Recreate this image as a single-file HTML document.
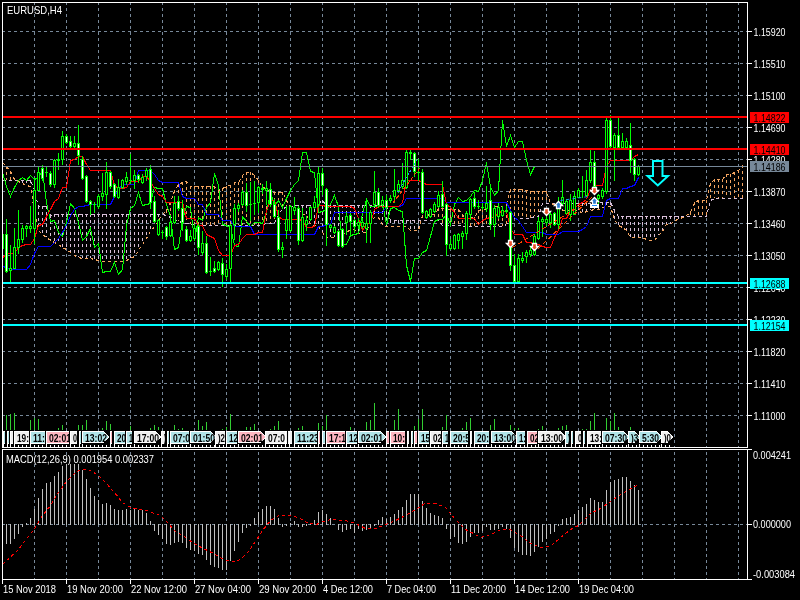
<!DOCTYPE html>
<html><head><meta charset="utf-8"><style>html,body{margin:0;padding:0;background:#000;overflow:hidden}svg{display:block;will-change:transform}</style></head>
<body><svg width="800" height="600" viewBox="0 0 800 600">
<rect width="800" height="600" fill="#000"/>
<g shape-rendering="crispEdges">
<line x1="34.5" y1="2" x2="34.5" y2="447" stroke="#778899" stroke-width="1" stroke-dasharray="3,3"/>
<line x1="34.5" y1="452" x2="34.5" y2="579" stroke="#778899" stroke-width="1" stroke-dasharray="3,3"/>
<line x1="66.5" y1="2" x2="66.5" y2="447" stroke="#778899" stroke-width="1" stroke-dasharray="3,3"/>
<line x1="66.5" y1="452" x2="66.5" y2="579" stroke="#778899" stroke-width="1" stroke-dasharray="3,3"/>
<line x1="98.5" y1="2" x2="98.5" y2="447" stroke="#778899" stroke-width="1" stroke-dasharray="3,3"/>
<line x1="98.5" y1="452" x2="98.5" y2="579" stroke="#778899" stroke-width="1" stroke-dasharray="3,3"/>
<line x1="130.5" y1="2" x2="130.5" y2="447" stroke="#778899" stroke-width="1" stroke-dasharray="3,3"/>
<line x1="130.5" y1="452" x2="130.5" y2="579" stroke="#778899" stroke-width="1" stroke-dasharray="3,3"/>
<line x1="162.5" y1="2" x2="162.5" y2="447" stroke="#778899" stroke-width="1" stroke-dasharray="3,3"/>
<line x1="162.5" y1="452" x2="162.5" y2="579" stroke="#778899" stroke-width="1" stroke-dasharray="3,3"/>
<line x1="194.5" y1="2" x2="194.5" y2="447" stroke="#778899" stroke-width="1" stroke-dasharray="3,3"/>
<line x1="194.5" y1="452" x2="194.5" y2="579" stroke="#778899" stroke-width="1" stroke-dasharray="3,3"/>
<line x1="226.5" y1="2" x2="226.5" y2="447" stroke="#778899" stroke-width="1" stroke-dasharray="3,3"/>
<line x1="226.5" y1="452" x2="226.5" y2="579" stroke="#778899" stroke-width="1" stroke-dasharray="3,3"/>
<line x1="258.5" y1="2" x2="258.5" y2="447" stroke="#778899" stroke-width="1" stroke-dasharray="3,3"/>
<line x1="258.5" y1="452" x2="258.5" y2="579" stroke="#778899" stroke-width="1" stroke-dasharray="3,3"/>
<line x1="290.5" y1="2" x2="290.5" y2="447" stroke="#778899" stroke-width="1" stroke-dasharray="3,3"/>
<line x1="290.5" y1="452" x2="290.5" y2="579" stroke="#778899" stroke-width="1" stroke-dasharray="3,3"/>
<line x1="322.5" y1="2" x2="322.5" y2="447" stroke="#778899" stroke-width="1" stroke-dasharray="3,3"/>
<line x1="322.5" y1="452" x2="322.5" y2="579" stroke="#778899" stroke-width="1" stroke-dasharray="3,3"/>
<line x1="354.5" y1="2" x2="354.5" y2="447" stroke="#778899" stroke-width="1" stroke-dasharray="3,3"/>
<line x1="354.5" y1="452" x2="354.5" y2="579" stroke="#778899" stroke-width="1" stroke-dasharray="3,3"/>
<line x1="386.5" y1="2" x2="386.5" y2="447" stroke="#778899" stroke-width="1" stroke-dasharray="3,3"/>
<line x1="386.5" y1="452" x2="386.5" y2="579" stroke="#778899" stroke-width="1" stroke-dasharray="3,3"/>
<line x1="418.5" y1="2" x2="418.5" y2="447" stroke="#778899" stroke-width="1" stroke-dasharray="3,3"/>
<line x1="418.5" y1="452" x2="418.5" y2="579" stroke="#778899" stroke-width="1" stroke-dasharray="3,3"/>
<line x1="450.5" y1="2" x2="450.5" y2="447" stroke="#778899" stroke-width="1" stroke-dasharray="3,3"/>
<line x1="450.5" y1="452" x2="450.5" y2="579" stroke="#778899" stroke-width="1" stroke-dasharray="3,3"/>
<line x1="482.5" y1="2" x2="482.5" y2="447" stroke="#778899" stroke-width="1" stroke-dasharray="3,3"/>
<line x1="482.5" y1="452" x2="482.5" y2="579" stroke="#778899" stroke-width="1" stroke-dasharray="3,3"/>
<line x1="514.5" y1="2" x2="514.5" y2="447" stroke="#778899" stroke-width="1" stroke-dasharray="3,3"/>
<line x1="514.5" y1="452" x2="514.5" y2="579" stroke="#778899" stroke-width="1" stroke-dasharray="3,3"/>
<line x1="546.5" y1="2" x2="546.5" y2="447" stroke="#778899" stroke-width="1" stroke-dasharray="3,3"/>
<line x1="546.5" y1="452" x2="546.5" y2="579" stroke="#778899" stroke-width="1" stroke-dasharray="3,3"/>
<line x1="578.5" y1="2" x2="578.5" y2="447" stroke="#778899" stroke-width="1" stroke-dasharray="3,3"/>
<line x1="578.5" y1="452" x2="578.5" y2="579" stroke="#778899" stroke-width="1" stroke-dasharray="3,3"/>
<line x1="610.5" y1="2" x2="610.5" y2="447" stroke="#778899" stroke-width="1" stroke-dasharray="3,3"/>
<line x1="610.5" y1="452" x2="610.5" y2="579" stroke="#778899" stroke-width="1" stroke-dasharray="3,3"/>
<line x1="642.5" y1="2" x2="642.5" y2="447" stroke="#778899" stroke-width="1" stroke-dasharray="3,3"/>
<line x1="642.5" y1="452" x2="642.5" y2="579" stroke="#778899" stroke-width="1" stroke-dasharray="3,3"/>
<line x1="674.5" y1="2" x2="674.5" y2="447" stroke="#778899" stroke-width="1" stroke-dasharray="3,3"/>
<line x1="674.5" y1="452" x2="674.5" y2="579" stroke="#778899" stroke-width="1" stroke-dasharray="3,3"/>
<line x1="706.5" y1="2" x2="706.5" y2="447" stroke="#778899" stroke-width="1" stroke-dasharray="3,3"/>
<line x1="706.5" y1="452" x2="706.5" y2="579" stroke="#778899" stroke-width="1" stroke-dasharray="3,3"/>
<line x1="738.5" y1="2" x2="738.5" y2="447" stroke="#778899" stroke-width="1" stroke-dasharray="3,3"/>
<line x1="738.5" y1="452" x2="738.5" y2="579" stroke="#778899" stroke-width="1" stroke-dasharray="3,3"/>
<line x1="2" y1="31.5" x2="747" y2="31.5" stroke="#778899" stroke-width="1" stroke-dasharray="3,3"/>
<line x1="2" y1="63.5" x2="747" y2="63.5" stroke="#778899" stroke-width="1" stroke-dasharray="3,3"/>
<line x1="2" y1="95.5" x2="747" y2="95.5" stroke="#778899" stroke-width="1" stroke-dasharray="3,3"/>
<line x1="2" y1="127.5" x2="747" y2="127.5" stroke="#778899" stroke-width="1" stroke-dasharray="3,3"/>
<line x1="2" y1="159.5" x2="747" y2="159.5" stroke="#778899" stroke-width="1" stroke-dasharray="3,3"/>
<line x1="2" y1="191.5" x2="747" y2="191.5" stroke="#778899" stroke-width="1" stroke-dasharray="3,3"/>
<line x1="2" y1="223.5" x2="747" y2="223.5" stroke="#778899" stroke-width="1" stroke-dasharray="3,3"/>
<line x1="2" y1="255.5" x2="747" y2="255.5" stroke="#778899" stroke-width="1" stroke-dasharray="3,3"/>
<line x1="2" y1="287.5" x2="747" y2="287.5" stroke="#778899" stroke-width="1" stroke-dasharray="3,3"/>
<line x1="2" y1="319.5" x2="747" y2="319.5" stroke="#778899" stroke-width="1" stroke-dasharray="3,3"/>
<line x1="2" y1="351.5" x2="747" y2="351.5" stroke="#778899" stroke-width="1" stroke-dasharray="3,3"/>
<line x1="2" y1="383.5" x2="747" y2="383.5" stroke="#778899" stroke-width="1" stroke-dasharray="3,3"/>
<line x1="2" y1="415.5" x2="747" y2="415.5" stroke="#778899" stroke-width="1" stroke-dasharray="3,3"/>
<line x1="2" y1="524.5" x2="747" y2="524.5" stroke="#778899" stroke-width="1" stroke-dasharray="3,3"/>
</g>
<defs><clipPath id="cm"><rect x="3" y="3" width="744" height="444"/></clipPath><clipPath id="cd"><rect x="3" y="450" width="744" height="129"/></clipPath></defs><g clip-path="url(#cm)"><g shape-rendering="crispEdges">
<line x1="2.5" y1="162" x2="2.5" y2="180" stroke="#F4A460" stroke-dasharray="3,3"/>
<line x1="6.5" y1="166" x2="6.5" y2="180" stroke="#F4A460" stroke-dasharray="3,3"/>
<line x1="10.5" y1="171" x2="10.5" y2="180" stroke="#F4A460" stroke-dasharray="3,3"/>
<line x1="14.5" y1="179" x2="14.5" y2="180" stroke="#F4A460" stroke-dasharray="3,3"/>
<line x1="18.5" y1="180" x2="18.5" y2="181" stroke="#D8BFD8" stroke-dasharray="3,3"/>
<line x1="22.5" y1="180" x2="22.5" y2="183" stroke="#D8BFD8" stroke-dasharray="3,3"/>
<line x1="26.5" y1="180" x2="26.5" y2="185" stroke="#D8BFD8" stroke-dasharray="3,3"/>
<line x1="30.5" y1="180" x2="30.5" y2="186" stroke="#D8BFD8" stroke-dasharray="3,3"/>
<line x1="34.5" y1="190" x2="34.5" y2="212" stroke="#D8BFD8" stroke-dasharray="3,3"/>
<line x1="38.5" y1="206" x2="38.5" y2="230" stroke="#D8BFD8" stroke-dasharray="3,3"/>
<line x1="42.5" y1="206" x2="42.5" y2="234" stroke="#D8BFD8" stroke-dasharray="3,3"/>
<line x1="46.5" y1="206" x2="46.5" y2="237" stroke="#D8BFD8" stroke-dasharray="3,3"/>
<line x1="50.5" y1="215" x2="50.5" y2="240" stroke="#D8BFD8" stroke-dasharray="3,3"/>
<line x1="54.5" y1="214" x2="54.5" y2="242" stroke="#D8BFD8" stroke-dasharray="3,3"/>
<line x1="58.5" y1="214" x2="58.5" y2="244" stroke="#D8BFD8" stroke-dasharray="3,3"/>
<line x1="62.5" y1="214" x2="62.5" y2="247" stroke="#D8BFD8" stroke-dasharray="3,3"/>
<line x1="66.5" y1="214" x2="66.5" y2="249" stroke="#D8BFD8" stroke-dasharray="3,3"/>
<line x1="70.5" y1="214" x2="70.5" y2="252" stroke="#D8BFD8" stroke-dasharray="3,3"/>
<line x1="74.5" y1="214" x2="74.5" y2="255" stroke="#D8BFD8" stroke-dasharray="3,3"/>
<line x1="78.5" y1="214" x2="78.5" y2="257" stroke="#D8BFD8" stroke-dasharray="3,3"/>
<line x1="82.5" y1="214" x2="82.5" y2="258" stroke="#D8BFD8" stroke-dasharray="3,3"/>
<line x1="86.5" y1="214" x2="86.5" y2="258" stroke="#D8BFD8" stroke-dasharray="3,3"/>
<line x1="90.5" y1="214" x2="90.5" y2="258" stroke="#D8BFD8" stroke-dasharray="3,3"/>
<line x1="94.5" y1="214" x2="94.5" y2="259" stroke="#D8BFD8" stroke-dasharray="3,3"/>
<line x1="98.5" y1="214" x2="98.5" y2="260" stroke="#D8BFD8" stroke-dasharray="3,3"/>
<line x1="102.5" y1="214" x2="102.5" y2="261" stroke="#D8BFD8" stroke-dasharray="3,3"/>
<line x1="106.5" y1="214" x2="106.5" y2="261" stroke="#D8BFD8" stroke-dasharray="3,3"/>
<line x1="110.5" y1="214" x2="110.5" y2="261" stroke="#D8BFD8" stroke-dasharray="3,3"/>
<line x1="114.5" y1="214" x2="114.5" y2="261" stroke="#D8BFD8" stroke-dasharray="3,3"/>
<line x1="118.5" y1="214" x2="118.5" y2="261" stroke="#D8BFD8" stroke-dasharray="3,3"/>
<line x1="122.5" y1="214" x2="122.5" y2="261" stroke="#D8BFD8" stroke-dasharray="3,3"/>
<line x1="126.5" y1="214" x2="126.5" y2="260" stroke="#D8BFD8" stroke-dasharray="3,3"/>
<line x1="130.5" y1="214" x2="130.5" y2="258" stroke="#D8BFD8" stroke-dasharray="3,3"/>
<line x1="134.5" y1="214" x2="134.5" y2="256" stroke="#D8BFD8" stroke-dasharray="3,3"/>
<line x1="138.5" y1="214" x2="138.5" y2="250" stroke="#D8BFD8" stroke-dasharray="3,3"/>
<line x1="142.5" y1="214" x2="142.5" y2="244" stroke="#D8BFD8" stroke-dasharray="3,3"/>
<line x1="146.5" y1="214" x2="146.5" y2="238" stroke="#D8BFD8" stroke-dasharray="3,3"/>
<line x1="150.5" y1="214" x2="150.5" y2="231" stroke="#D8BFD8" stroke-dasharray="3,3"/>
<line x1="154.5" y1="214" x2="154.5" y2="226" stroke="#D8BFD8" stroke-dasharray="3,3"/>
<line x1="158.5" y1="214" x2="158.5" y2="220" stroke="#D8BFD8" stroke-dasharray="3,3"/>
<line x1="166.5" y1="210" x2="166.5" y2="215" stroke="#F4A460" stroke-dasharray="3,3"/>
<line x1="170.5" y1="202" x2="170.5" y2="217" stroke="#F4A460" stroke-dasharray="3,3"/>
<line x1="174.5" y1="190" x2="174.5" y2="219" stroke="#F4A460" stroke-dasharray="3,3"/>
<line x1="178.5" y1="184" x2="178.5" y2="221" stroke="#F4A460" stroke-dasharray="3,3"/>
<line x1="182.5" y1="182" x2="182.5" y2="222" stroke="#F4A460" stroke-dasharray="3,3"/>
<line x1="186.5" y1="181" x2="186.5" y2="223" stroke="#F4A460" stroke-dasharray="3,3"/>
<line x1="190.5" y1="186" x2="190.5" y2="224" stroke="#F4A460" stroke-dasharray="3,3"/>
<line x1="194.5" y1="186" x2="194.5" y2="224" stroke="#F4A460" stroke-dasharray="3,3"/>
<line x1="198.5" y1="186" x2="198.5" y2="225" stroke="#F4A460" stroke-dasharray="3,3"/>
<line x1="202.5" y1="186" x2="202.5" y2="225" stroke="#F4A460" stroke-dasharray="3,3"/>
<line x1="206.5" y1="186" x2="206.5" y2="225" stroke="#F4A460" stroke-dasharray="3,3"/>
<line x1="210.5" y1="186" x2="210.5" y2="225" stroke="#F4A460" stroke-dasharray="3,3"/>
<line x1="214.5" y1="186" x2="214.5" y2="225" stroke="#F4A460" stroke-dasharray="3,3"/>
<line x1="218.5" y1="190" x2="218.5" y2="225" stroke="#F4A460" stroke-dasharray="3,3"/>
<line x1="222.5" y1="188" x2="222.5" y2="225" stroke="#F4A460" stroke-dasharray="3,3"/>
<line x1="226.5" y1="186" x2="226.5" y2="225" stroke="#F4A460" stroke-dasharray="3,3"/>
<line x1="230.5" y1="185" x2="230.5" y2="225" stroke="#F4A460" stroke-dasharray="3,3"/>
<line x1="234.5" y1="182" x2="234.5" y2="225" stroke="#F4A460" stroke-dasharray="3,3"/>
<line x1="238.5" y1="182" x2="238.5" y2="225" stroke="#F4A460" stroke-dasharray="3,3"/>
<line x1="242.5" y1="175" x2="242.5" y2="225" stroke="#F4A460" stroke-dasharray="3,3"/>
<line x1="246.5" y1="172" x2="246.5" y2="225" stroke="#F4A460" stroke-dasharray="3,3"/>
<line x1="250.5" y1="172" x2="250.5" y2="225" stroke="#F4A460" stroke-dasharray="3,3"/>
<line x1="254.5" y1="175" x2="254.5" y2="225" stroke="#F4A460" stroke-dasharray="3,3"/>
<line x1="258.5" y1="180" x2="258.5" y2="225" stroke="#F4A460" stroke-dasharray="3,3"/>
<line x1="262.5" y1="187" x2="262.5" y2="224" stroke="#F4A460" stroke-dasharray="3,3"/>
<line x1="266.5" y1="188" x2="266.5" y2="223" stroke="#F4A460" stroke-dasharray="3,3"/>
<line x1="270.5" y1="192" x2="270.5" y2="223" stroke="#F4A460" stroke-dasharray="3,3"/>
<line x1="274.5" y1="192" x2="274.5" y2="223" stroke="#F4A460" stroke-dasharray="3,3"/>
<line x1="278.5" y1="192" x2="278.5" y2="214" stroke="#F4A460" stroke-dasharray="3,3"/>
<line x1="282.5" y1="192" x2="282.5" y2="208" stroke="#F4A460" stroke-dasharray="3,3"/>
<line x1="286.5" y1="199" x2="286.5" y2="207" stroke="#F4A460" stroke-dasharray="3,3"/>
<line x1="290.5" y1="207" x2="290.5" y2="208" stroke="#D8BFD8" stroke-dasharray="3,3"/>
<line x1="294.5" y1="205" x2="294.5" y2="208" stroke="#D8BFD8" stroke-dasharray="3,3"/>
<line x1="298.5" y1="205" x2="298.5" y2="208" stroke="#D8BFD8" stroke-dasharray="3,3"/>
<line x1="302.5" y1="205" x2="302.5" y2="214" stroke="#D8BFD8" stroke-dasharray="3,3"/>
<line x1="306.5" y1="205" x2="306.5" y2="214" stroke="#D8BFD8" stroke-dasharray="3,3"/>
<line x1="310.5" y1="205" x2="310.5" y2="224" stroke="#D8BFD8" stroke-dasharray="3,3"/>
<line x1="314.5" y1="203" x2="314.5" y2="225" stroke="#D8BFD8" stroke-dasharray="3,3"/>
<line x1="318.5" y1="203" x2="318.5" y2="226" stroke="#D8BFD8" stroke-dasharray="3,3"/>
<line x1="322.5" y1="200" x2="322.5" y2="232" stroke="#D8BFD8" stroke-dasharray="3,3"/>
<line x1="326.5" y1="205" x2="326.5" y2="237" stroke="#D8BFD8" stroke-dasharray="3,3"/>
<line x1="330.5" y1="205" x2="330.5" y2="237" stroke="#D8BFD8" stroke-dasharray="3,3"/>
<line x1="334.5" y1="205" x2="334.5" y2="237" stroke="#D8BFD8" stroke-dasharray="3,3"/>
<line x1="338.5" y1="205" x2="338.5" y2="235" stroke="#D8BFD8" stroke-dasharray="3,3"/>
<line x1="342.5" y1="205" x2="342.5" y2="235" stroke="#D8BFD8" stroke-dasharray="3,3"/>
<line x1="346.5" y1="205" x2="346.5" y2="231" stroke="#D8BFD8" stroke-dasharray="3,3"/>
<line x1="350.5" y1="205" x2="350.5" y2="230" stroke="#D8BFD8" stroke-dasharray="3,3"/>
<line x1="354.5" y1="205" x2="354.5" y2="229" stroke="#D8BFD8" stroke-dasharray="3,3"/>
<line x1="358.5" y1="205" x2="358.5" y2="233" stroke="#D8BFD8" stroke-dasharray="3,3"/>
<line x1="362.5" y1="205" x2="362.5" y2="232" stroke="#D8BFD8" stroke-dasharray="3,3"/>
<line x1="366.5" y1="205" x2="366.5" y2="232" stroke="#D8BFD8" stroke-dasharray="3,3"/>
<line x1="370.5" y1="205" x2="370.5" y2="221" stroke="#D8BFD8" stroke-dasharray="3,3"/>
<line x1="374.5" y1="205" x2="374.5" y2="217" stroke="#D8BFD8" stroke-dasharray="3,3"/>
<line x1="378.5" y1="205" x2="378.5" y2="217" stroke="#D8BFD8" stroke-dasharray="3,3"/>
<line x1="382.5" y1="205" x2="382.5" y2="224" stroke="#D8BFD8" stroke-dasharray="3,3"/>
<line x1="386.5" y1="205" x2="386.5" y2="226" stroke="#D8BFD8" stroke-dasharray="3,3"/>
<line x1="390.5" y1="220" x2="390.5" y2="226" stroke="#D8BFD8" stroke-dasharray="3,3"/>
<line x1="394.5" y1="220" x2="394.5" y2="226" stroke="#D8BFD8" stroke-dasharray="3,3"/>
<line x1="398.5" y1="220" x2="398.5" y2="226" stroke="#D8BFD8" stroke-dasharray="3,3"/>
<line x1="402.5" y1="220" x2="402.5" y2="226" stroke="#D8BFD8" stroke-dasharray="3,3"/>
<line x1="406.5" y1="220" x2="406.5" y2="226" stroke="#D8BFD8" stroke-dasharray="3,3"/>
<line x1="410.5" y1="220" x2="410.5" y2="230" stroke="#D8BFD8" stroke-dasharray="3,3"/>
<line x1="414.5" y1="220" x2="414.5" y2="230" stroke="#D8BFD8" stroke-dasharray="3,3"/>
<line x1="418.5" y1="220" x2="418.5" y2="230" stroke="#D8BFD8" stroke-dasharray="3,3"/>
<line x1="422.5" y1="215" x2="422.5" y2="220" stroke="#F4A460" stroke-dasharray="3,3"/>
<line x1="426.5" y1="215" x2="426.5" y2="220" stroke="#F4A460" stroke-dasharray="3,3"/>
<line x1="430.5" y1="214" x2="430.5" y2="220" stroke="#F4A460" stroke-dasharray="3,3"/>
<line x1="434.5" y1="214" x2="434.5" y2="220" stroke="#F4A460" stroke-dasharray="3,3"/>
<line x1="438.5" y1="208" x2="438.5" y2="220" stroke="#F4A460" stroke-dasharray="3,3"/>
<line x1="442.5" y1="208" x2="442.5" y2="225" stroke="#F4A460" stroke-dasharray="3,3"/>
<line x1="446.5" y1="209" x2="446.5" y2="225" stroke="#F4A460" stroke-dasharray="3,3"/>
<line x1="450.5" y1="209" x2="450.5" y2="225" stroke="#F4A460" stroke-dasharray="3,3"/>
<line x1="454.5" y1="209" x2="454.5" y2="225" stroke="#F4A460" stroke-dasharray="3,3"/>
<line x1="458.5" y1="209" x2="458.5" y2="225" stroke="#F4A460" stroke-dasharray="3,3"/>
<line x1="462.5" y1="214" x2="462.5" y2="226" stroke="#F4A460" stroke-dasharray="3,3"/>
<line x1="466.5" y1="220" x2="466.5" y2="226" stroke="#F4A460" stroke-dasharray="3,3"/>
<line x1="470.5" y1="217" x2="470.5" y2="226" stroke="#F4A460" stroke-dasharray="3,3"/>
<line x1="474.5" y1="217" x2="474.5" y2="226" stroke="#F4A460" stroke-dasharray="3,3"/>
<line x1="478.5" y1="210" x2="478.5" y2="226" stroke="#F4A460" stroke-dasharray="3,3"/>
<line x1="482.5" y1="209" x2="482.5" y2="226" stroke="#F4A460" stroke-dasharray="3,3"/>
<line x1="486.5" y1="209" x2="486.5" y2="226" stroke="#F4A460" stroke-dasharray="3,3"/>
<line x1="490.5" y1="206" x2="490.5" y2="226" stroke="#F4A460" stroke-dasharray="3,3"/>
<line x1="494.5" y1="206" x2="494.5" y2="226" stroke="#F4A460" stroke-dasharray="3,3"/>
<line x1="498.5" y1="206" x2="498.5" y2="226" stroke="#F4A460" stroke-dasharray="3,3"/>
<line x1="502.5" y1="206" x2="502.5" y2="226" stroke="#F4A460" stroke-dasharray="3,3"/>
<line x1="506.5" y1="203" x2="506.5" y2="224" stroke="#F4A460" stroke-dasharray="3,3"/>
<line x1="510.5" y1="189" x2="510.5" y2="218" stroke="#F4A460" stroke-dasharray="3,3"/>
<line x1="514.5" y1="189" x2="514.5" y2="218" stroke="#F4A460" stroke-dasharray="3,3"/>
<line x1="518.5" y1="189" x2="518.5" y2="218" stroke="#F4A460" stroke-dasharray="3,3"/>
<line x1="522.5" y1="189" x2="522.5" y2="218" stroke="#F4A460" stroke-dasharray="3,3"/>
<line x1="526.5" y1="190" x2="526.5" y2="218" stroke="#F4A460" stroke-dasharray="3,3"/>
<line x1="530.5" y1="191" x2="530.5" y2="218" stroke="#F4A460" stroke-dasharray="3,3"/>
<line x1="534.5" y1="191" x2="534.5" y2="216" stroke="#F4A460" stroke-dasharray="3,3"/>
<line x1="538.5" y1="191" x2="538.5" y2="216" stroke="#F4A460" stroke-dasharray="3,3"/>
<line x1="542.5" y1="191" x2="542.5" y2="203" stroke="#F4A460" stroke-dasharray="3,3"/>
<line x1="546.5" y1="191" x2="546.5" y2="203" stroke="#F4A460" stroke-dasharray="3,3"/>
<line x1="554.5" y1="203" x2="554.5" y2="204" stroke="#D8BFD8" stroke-dasharray="3,3"/>
<line x1="558.5" y1="203" x2="558.5" y2="207" stroke="#D8BFD8" stroke-dasharray="3,3"/>
<line x1="562.5" y1="203" x2="562.5" y2="210" stroke="#D8BFD8" stroke-dasharray="3,3"/>
<line x1="566.5" y1="203" x2="566.5" y2="210" stroke="#D8BFD8" stroke-dasharray="3,3"/>
<line x1="570.5" y1="203" x2="570.5" y2="210" stroke="#D8BFD8" stroke-dasharray="3,3"/>
<line x1="574.5" y1="203" x2="574.5" y2="210" stroke="#D8BFD8" stroke-dasharray="3,3"/>
<line x1="578.5" y1="203" x2="578.5" y2="210" stroke="#D8BFD8" stroke-dasharray="3,3"/>
<line x1="582.5" y1="203" x2="582.5" y2="213" stroke="#D8BFD8" stroke-dasharray="3,3"/>
<line x1="586.5" y1="203" x2="586.5" y2="211" stroke="#D8BFD8" stroke-dasharray="3,3"/>
<line x1="590.5" y1="203" x2="590.5" y2="210" stroke="#D8BFD8" stroke-dasharray="3,3"/>
<line x1="594.5" y1="202" x2="594.5" y2="209" stroke="#D8BFD8" stroke-dasharray="3,3"/>
<line x1="598.5" y1="202" x2="598.5" y2="209" stroke="#D8BFD8" stroke-dasharray="3,3"/>
<line x1="602.5" y1="202" x2="602.5" y2="207" stroke="#D8BFD8" stroke-dasharray="3,3"/>
<line x1="606.5" y1="202" x2="606.5" y2="206" stroke="#D8BFD8" stroke-dasharray="3,3"/>
<line x1="610.5" y1="202" x2="610.5" y2="206" stroke="#D8BFD8" stroke-dasharray="3,3"/>
<line x1="614.5" y1="210" x2="614.5" y2="219" stroke="#D8BFD8" stroke-dasharray="3,3"/>
<line x1="618.5" y1="216" x2="618.5" y2="225" stroke="#D8BFD8" stroke-dasharray="3,3"/>
<line x1="622.5" y1="216" x2="622.5" y2="227" stroke="#D8BFD8" stroke-dasharray="3,3"/>
<line x1="626.5" y1="216" x2="626.5" y2="230" stroke="#D8BFD8" stroke-dasharray="3,3"/>
<line x1="630.5" y1="216" x2="630.5" y2="237" stroke="#D8BFD8" stroke-dasharray="3,3"/>
<line x1="634.5" y1="216" x2="634.5" y2="237" stroke="#D8BFD8" stroke-dasharray="3,3"/>
<line x1="638.5" y1="216" x2="638.5" y2="237" stroke="#D8BFD8" stroke-dasharray="3,3"/>
<line x1="642.5" y1="216" x2="642.5" y2="237" stroke="#D8BFD8" stroke-dasharray="3,3"/>
<line x1="646.5" y1="216" x2="646.5" y2="239" stroke="#D8BFD8" stroke-dasharray="3,3"/>
<line x1="650.5" y1="216" x2="650.5" y2="240" stroke="#D8BFD8" stroke-dasharray="3,3"/>
<line x1="654.5" y1="216" x2="654.5" y2="240" stroke="#D8BFD8" stroke-dasharray="3,3"/>
<line x1="658.5" y1="216" x2="658.5" y2="235" stroke="#D8BFD8" stroke-dasharray="3,3"/>
<line x1="662.5" y1="216" x2="662.5" y2="231" stroke="#D8BFD8" stroke-dasharray="3,3"/>
<line x1="666.5" y1="216" x2="666.5" y2="224" stroke="#D8BFD8" stroke-dasharray="3,3"/>
<line x1="670.5" y1="216" x2="670.5" y2="224" stroke="#D8BFD8" stroke-dasharray="3,3"/>
<line x1="674.5" y1="216" x2="674.5" y2="220" stroke="#D8BFD8" stroke-dasharray="3,3"/>
<line x1="678.5" y1="216" x2="678.5" y2="219" stroke="#D8BFD8" stroke-dasharray="3,3"/>
<line x1="682.5" y1="216" x2="682.5" y2="217" stroke="#D8BFD8" stroke-dasharray="3,3"/>
<line x1="686.5" y1="215" x2="686.5" y2="216" stroke="#F4A460" stroke-dasharray="3,3"/>
<line x1="690.5" y1="212" x2="690.5" y2="216" stroke="#F4A460" stroke-dasharray="3,3"/>
<line x1="694.5" y1="202" x2="694.5" y2="216" stroke="#F4A460" stroke-dasharray="3,3"/>
<line x1="698.5" y1="200" x2="698.5" y2="216" stroke="#F4A460" stroke-dasharray="3,3"/>
<line x1="702.5" y1="200" x2="702.5" y2="216" stroke="#F4A460" stroke-dasharray="3,3"/>
<line x1="706.5" y1="200" x2="706.5" y2="216" stroke="#F4A460" stroke-dasharray="3,3"/>
<line x1="710.5" y1="183" x2="710.5" y2="200" stroke="#F4A460" stroke-dasharray="3,3"/>
<line x1="714.5" y1="179" x2="714.5" y2="198" stroke="#F4A460" stroke-dasharray="3,3"/>
<line x1="718.5" y1="179" x2="718.5" y2="198" stroke="#F4A460" stroke-dasharray="3,3"/>
<line x1="722.5" y1="179" x2="722.5" y2="198" stroke="#F4A460" stroke-dasharray="3,3"/>
<line x1="726.5" y1="174" x2="726.5" y2="198" stroke="#F4A460" stroke-dasharray="3,3"/>
<line x1="730.5" y1="174" x2="730.5" y2="198" stroke="#F4A460" stroke-dasharray="3,3"/>
<line x1="734.5" y1="172" x2="734.5" y2="198" stroke="#F4A460" stroke-dasharray="3,3"/>
<line x1="738.5" y1="170" x2="738.5" y2="198" stroke="#F4A460" stroke-dasharray="3,3"/>
<line x1="742.5" y1="165" x2="742.5" y2="198" stroke="#F4A460" stroke-dasharray="3,3"/>
</g>
<g shape-rendering="crispEdges">
<polyline points="2.5,180.5 6.5,180.5 10.5,180.5 14.5,180.5 18.5,180.5 22.5,180.5 26.5,180.5 30.5,180.5 34.5,190.5 38.5,206.5 42.5,206.5 46.5,206.5 50.5,215.5 54.5,214.5 58.5,214.5 62.5,214.5 66.5,214.5 70.5,214.5 74.5,214.5 78.5,214.5 82.5,214.5 86.5,214.5 90.5,214.5 94.5,214.5 98.5,214.5 102.5,214.5 106.5,214.5 110.5,214.5 114.5,214.5 118.5,214.5 122.5,214.5 126.5,214.5 130.5,214.5 134.5,214.5 138.5,214.5 142.5,214.5 146.5,214.5 150.5,214.5 154.5,214.5 158.5,214.5 162.5,214.5 166.5,215.5 170.5,217.5 174.5,219.5 178.5,221.5 182.5,222.5 186.5,223.5 190.5,224.5 194.5,224.5 198.5,225.5 202.5,225.5 206.5,225.5 210.5,225.5 214.5,225.5 218.5,225.5 222.5,225.5 226.5,225.5 230.5,225.5 234.5,225.5 238.5,225.5 242.5,225.5 246.5,225.5 250.5,225.5 254.5,225.5 258.5,225.5 262.5,224.5 266.5,223.5 270.5,223.5 274.5,223.5 278.5,214.5 282.5,208.5 286.5,207.5 290.5,207.5 294.5,205.5 298.5,205.5 302.5,205.5 306.5,205.5 310.5,205.5 314.5,203.5 318.5,203.5 322.5,200.5 326.5,205.5 330.5,205.5 334.5,205.5 338.5,205.5 342.5,205.5 346.5,205.5 350.5,205.5 354.5,205.5 358.5,205.5 362.5,205.5 366.5,205.5 370.5,205.5 374.5,205.5 378.5,205.5 382.5,205.5 386.5,205.5 390.5,220.5 394.5,220.5 398.5,220.5 402.5,220.5 406.5,220.5 410.5,220.5 414.5,220.5 418.5,220.5 422.5,220.5 426.5,220.5 430.5,220.5 434.5,220.5 438.5,220.5 442.5,225.5 446.5,225.5 450.5,225.5 454.5,225.5 458.5,225.5 462.5,226.5 466.5,226.5 470.5,226.5 474.5,226.5 478.5,226.5 482.5,226.5 486.5,226.5 490.5,226.5 494.5,226.5 498.5,226.5 502.5,226.5 506.5,224.5 510.5,218.5 514.5,218.5 518.5,218.5 522.5,218.5 526.5,218.5 530.5,218.5 534.5,216.5 538.5,216.5 542.5,203.5 546.5,203.5 550.5,203.5 554.5,203.5 558.5,203.5 562.5,203.5 566.5,203.5 570.5,203.5 574.5,203.5 578.5,203.5 582.5,203.5 586.5,203.5 590.5,203.5 594.5,202.5 598.5,202.5 602.5,202.5 606.5,202.5 610.5,202.5 614.5,210.5 618.5,216.5 622.5,216.5 626.5,216.5 630.5,216.5 634.5,216.5 638.5,216.5 642.5,216.5 646.5,216.5 650.5,216.5 654.5,216.5 658.5,216.5 662.5,216.5 666.5,216.5 670.5,216.5 674.5,216.5 678.5,216.5 682.5,216.5 686.5,216.5 690.5,216.5 694.5,216.5 698.5,216.5 702.5,216.5 706.5,216.5 710.5,200.5 714.5,198.5 718.5,198.5 722.5,198.5 726.5,198.5 730.5,198.5 734.5,198.5 738.5,198.5 742.5,198.5" fill="none" stroke="#D8BFD8" stroke-width="1" stroke-dasharray="3,3"/>
<polyline points="2.5,162.5 6.5,166.5 10.5,171.5 14.5,179.5 18.5,181.5 22.5,183.5 26.5,185.5 30.5,186.5 34.5,212.5 38.5,230.5 42.5,234.5 46.5,237.5 50.5,240.5 54.5,242.5 58.5,244.5 62.5,247.5 66.5,249.5 70.5,252.5 74.5,255.5 78.5,257.5 82.5,258.5 86.5,258.5 90.5,258.5 94.5,259.5 98.5,260.5 102.5,261.5 106.5,261.5 110.5,261.5 114.5,261.5 118.5,261.5 122.5,261.5 126.5,260.5 130.5,258.5 134.5,256.5 138.5,250.5 142.5,244.5 146.5,238.5 150.5,231.5 154.5,226.5 158.5,220.5 162.5,214.5 166.5,210.5 170.5,202.5 174.5,190.5 178.5,184.5 182.5,182.5 186.5,181.5 190.5,186.5 194.5,186.5 198.5,186.5 202.5,186.5 206.5,186.5 210.5,186.5 214.5,186.5 218.5,190.5 222.5,188.5 226.5,186.5 230.5,185.5 234.5,182.5 238.5,182.5 242.5,175.5 246.5,172.5 250.5,172.5 254.5,175.5 258.5,180.5 262.5,187.5 266.5,188.5 270.5,192.5 274.5,192.5 278.5,192.5 282.5,192.5 286.5,199.5 290.5,208.5 294.5,208.5 298.5,208.5 302.5,214.5 306.5,214.5 310.5,224.5 314.5,225.5 318.5,226.5 322.5,232.5 326.5,237.5 330.5,237.5 334.5,237.5 338.5,235.5 342.5,235.5 346.5,231.5 350.5,230.5 354.5,229.5 358.5,233.5 362.5,232.5 366.5,232.5 370.5,221.5 374.5,217.5 378.5,217.5 382.5,224.5 386.5,226.5 390.5,226.5 394.5,226.5 398.5,226.5 402.5,226.5 406.5,226.5 410.5,230.5 414.5,230.5 418.5,230.5 422.5,215.5 426.5,215.5 430.5,214.5 434.5,214.5 438.5,208.5 442.5,208.5 446.5,209.5 450.5,209.5 454.5,209.5 458.5,209.5 462.5,214.5 466.5,220.5 470.5,217.5 474.5,217.5 478.5,210.5 482.5,209.5 486.5,209.5 490.5,206.5 494.5,206.5 498.5,206.5 502.5,206.5 506.5,203.5 510.5,189.5 514.5,189.5 518.5,189.5 522.5,189.5 526.5,190.5 530.5,191.5 534.5,191.5 538.5,191.5 542.5,191.5 546.5,191.5 550.5,203.5 554.5,204.5 558.5,207.5 562.5,210.5 566.5,210.5 570.5,210.5 574.5,210.5 578.5,210.5 582.5,213.5 586.5,211.5 590.5,210.5 594.5,209.5 598.5,209.5 602.5,207.5 606.5,206.5 610.5,206.5 614.5,219.5 618.5,225.5 622.5,227.5 626.5,230.5 630.5,237.5 634.5,237.5 638.5,237.5 642.5,237.5 646.5,239.5 650.5,240.5 654.5,240.5 658.5,235.5 662.5,231.5 666.5,224.5 670.5,224.5 674.5,220.5 678.5,219.5 682.5,217.5 686.5,215.5 690.5,212.5 694.5,202.5 698.5,200.5 702.5,200.5 706.5,200.5 710.5,183.5 714.5,179.5 718.5,179.5 722.5,179.5 726.5,174.5 730.5,174.5 734.5,172.5 738.5,170.5 742.5,165.5" fill="none" stroke="#F4A460" stroke-width="1" stroke-dasharray="3,3"/>
</g>
<g shape-rendering="crispEdges">
<rect x="6" y="415" width="1" height="15" fill="#32CD32"/>
<rect x="10" y="414" width="1" height="16" fill="#32CD32"/>
<rect x="14" y="413" width="1" height="17" fill="#32CD32"/>
<rect x="30" y="420" width="1" height="10" fill="#32CD32"/>
<rect x="34" y="418" width="1" height="12" fill="#32CD32"/>
<rect x="38" y="419" width="1" height="11" fill="#32CD32"/>
<rect x="58" y="428" width="1" height="2" fill="#32CD32"/>
<rect x="62" y="425" width="1" height="5" fill="#32CD32"/>
<rect x="78" y="425" width="1" height="5" fill="#32CD32"/>
<rect x="82" y="425" width="1" height="5" fill="#32CD32"/>
<rect x="86" y="420" width="1" height="10" fill="#32CD32"/>
<rect x="102" y="428" width="1" height="2" fill="#32CD32"/>
<rect x="106" y="421" width="1" height="9" fill="#32CD32"/>
<rect x="110" y="424" width="1" height="6" fill="#32CD32"/>
<rect x="130" y="426" width="1" height="4" fill="#32CD32"/>
<rect x="150" y="428" width="1" height="2" fill="#32CD32"/>
<rect x="154" y="425" width="1" height="5" fill="#32CD32"/>
<rect x="158" y="427" width="1" height="3" fill="#32CD32"/>
<rect x="174" y="425" width="1" height="5" fill="#32CD32"/>
<rect x="178" y="429" width="1" height="1" fill="#32CD32"/>
<rect x="182" y="428" width="1" height="2" fill="#32CD32"/>
<rect x="198" y="420" width="1" height="10" fill="#32CD32"/>
<rect x="202" y="426" width="1" height="4" fill="#32CD32"/>
<rect x="206" y="422" width="1" height="8" fill="#32CD32"/>
<rect x="222" y="429" width="1" height="1" fill="#32CD32"/>
<rect x="226" y="427" width="1" height="3" fill="#32CD32"/>
<rect x="230" y="414" width="1" height="16" fill="#32CD32"/>
<rect x="246" y="427" width="1" height="3" fill="#32CD32"/>
<rect x="250" y="427" width="1" height="3" fill="#32CD32"/>
<rect x="254" y="424" width="1" height="6" fill="#32CD32"/>
<rect x="270" y="429" width="1" height="1" fill="#32CD32"/>
<rect x="274" y="426" width="1" height="4" fill="#32CD32"/>
<rect x="278" y="421" width="1" height="9" fill="#32CD32"/>
<rect x="298" y="428" width="1" height="2" fill="#32CD32"/>
<rect x="302" y="426" width="1" height="4" fill="#32CD32"/>
<rect x="318" y="423" width="1" height="7" fill="#32CD32"/>
<rect x="322" y="426" width="1" height="4" fill="#32CD32"/>
<rect x="326" y="415" width="1" height="15" fill="#32CD32"/>
<rect x="350" y="427" width="1" height="3" fill="#32CD32"/>
<rect x="366" y="422" width="1" height="8" fill="#32CD32"/>
<rect x="370" y="420" width="1" height="10" fill="#32CD32"/>
<rect x="374" y="403" width="1" height="27" fill="#32CD32"/>
<rect x="394" y="420" width="1" height="10" fill="#32CD32"/>
<rect x="398" y="409" width="1" height="21" fill="#32CD32"/>
<rect x="414" y="426" width="1" height="4" fill="#32CD32"/>
<rect x="418" y="419" width="1" height="11" fill="#32CD32"/>
<rect x="422" y="409" width="1" height="21" fill="#32CD32"/>
<rect x="442" y="427" width="1" height="3" fill="#32CD32"/>
<rect x="446" y="415" width="1" height="15" fill="#32CD32"/>
<rect x="462" y="428" width="1" height="2" fill="#32CD32"/>
<rect x="466" y="422" width="1" height="8" fill="#32CD32"/>
<rect x="470" y="418" width="1" height="12" fill="#32CD32"/>
<rect x="490" y="425" width="1" height="5" fill="#32CD32"/>
<rect x="494" y="419" width="1" height="11" fill="#32CD32"/>
<rect x="510" y="425" width="1" height="5" fill="#32CD32"/>
<rect x="514" y="428" width="1" height="2" fill="#32CD32"/>
<rect x="518" y="428" width="1" height="2" fill="#32CD32"/>
<rect x="538" y="429" width="1" height="1" fill="#32CD32"/>
<rect x="542" y="426" width="1" height="4" fill="#32CD32"/>
<rect x="558" y="428" width="1" height="2" fill="#32CD32"/>
<rect x="562" y="426" width="1" height="4" fill="#32CD32"/>
<rect x="566" y="425" width="1" height="5" fill="#32CD32"/>
<rect x="582" y="429" width="1" height="1" fill="#32CD32"/>
<rect x="586" y="429" width="1" height="1" fill="#32CD32"/>
<rect x="590" y="421" width="1" height="9" fill="#32CD32"/>
<rect x="594" y="413" width="1" height="17" fill="#32CD32"/>
<rect x="606" y="418" width="1" height="12" fill="#32CD32"/>
<rect x="610" y="421" width="1" height="9" fill="#32CD32"/>
<rect x="614" y="413" width="1" height="17" fill="#32CD32"/>
<rect x="618" y="427" width="1" height="3" fill="#32CD32"/>
<rect x="630" y="427" width="1" height="3" fill="#32CD32"/>
</g>
<g shape-rendering="crispEdges">
<polyline points="2.5,172.5 6.5,186.5 10.5,196.5 14.5,187.5 18.5,180.5 22.5,177.5 26.5,180.5 30.5,175.5 34.5,179.5 38.5,177.5 42.5,170.5 46.5,202.5 50.5,221.5 54.5,220.5 58.5,232.5 62.5,236.5 66.5,222.5 70.5,203.5 74.5,208.5 78.5,222.5 82.5,240.5 86.5,236.5 90.5,228.5 94.5,247.5 98.5,243.5 102.5,272.5 106.5,271.5 110.5,271.5 114.5,262.5 118.5,274.5 122.5,269.5 126.5,225.5 130.5,208.5 134.5,205.5 138.5,192.5 142.5,205.5 146.5,204.5 150.5,203.5 154.5,187.5 158.5,188.5 162.5,188.5 166.5,204.5 170.5,216.5 174.5,249.5 178.5,247.5 182.5,219.5 186.5,206.5 190.5,207.5 194.5,240.5 198.5,217.5 202.5,220.5 206.5,207.5 210.5,202.5 214.5,173.5 218.5,185.5 222.5,224.5 226.5,225.5 230.5,227.5 234.5,245.5 238.5,246.5 242.5,216.5 246.5,221.5 250.5,226.5 254.5,222.5 258.5,222.5 262.5,223.5 266.5,212.5 270.5,192.5 274.5,205.5 278.5,200.5 282.5,207.5 286.5,198.5 290.5,190.5 294.5,184.5 298.5,180.5 302.5,152.5 306.5,152.5 310.5,171.5 314.5,172.5 318.5,212.5 322.5,211.5 326.5,209.5 330.5,204.5 334.5,195.5 338.5,206.5 342.5,244.5 346.5,244.5 350.5,235.5 354.5,234.5 358.5,233.5 362.5,213.5 366.5,199.5 370.5,206.5 374.5,206.5 378.5,207.5 382.5,203.5 386.5,224.5 390.5,208.5 394.5,207.5 398.5,210.5 402.5,211.5 406.5,265.5 410.5,281.5 414.5,258.5 418.5,258.5 422.5,252.5 426.5,250.5 430.5,236.5 434.5,221.5 438.5,219.5 442.5,219.5 446.5,214.5 450.5,224.5 454.5,204.5 458.5,197.5 462.5,201.5 466.5,200.5 470.5,196.5 474.5,190.5 478.5,191.5 482.5,180.5 486.5,162.5 490.5,186.5 494.5,195.5 498.5,190.5 502.5,120.5 506.5,146.5 510.5,135.5 514.5,147.5 518.5,141.5 522.5,141.5 526.5,160.5 530.5,174.5 534.5,166.5" fill="none" stroke="#00ff00" stroke-width="1"/>
<polyline points="2.5,266.5 6.5,267.5 10.5,269.5 14.5,269.5 18.5,269.5 22.5,269.5 26.5,269.5 30.5,264.5 34.5,253.5 38.5,246.5 42.5,246.5 46.5,246.5 50.5,246.5 54.5,242.5 58.5,238.5 62.5,232.5 66.5,225.5 70.5,215.5 74.5,209.5 78.5,206.5 82.5,206.5 86.5,205.5 90.5,204.5 94.5,204.5 98.5,204.5 102.5,204.5 106.5,204.5 110.5,204.5 114.5,196.5 118.5,189.5 122.5,184.5 126.5,184.5 130.5,184.5 134.5,184.5 138.5,170.5 142.5,170.5 146.5,170.5 150.5,170.5 154.5,174.5 158.5,180.5 162.5,182.5 166.5,182.5 170.5,182.5 174.5,182.5 178.5,182.5 182.5,196.5 186.5,198.5 190.5,198.5 194.5,198.5 198.5,204.5 202.5,204.5 206.5,214.5 210.5,214.5 214.5,214.5 218.5,214.5 222.5,220.5 226.5,220.5 230.5,220.5 234.5,226.5 238.5,226.5 242.5,226.5 246.5,226.5 250.5,226.5 254.5,234.5 258.5,234.5 262.5,234.5 266.5,234.5 270.5,234.5 274.5,234.5 278.5,234.5 282.5,234.5 286.5,234.5 290.5,234.5 294.5,234.5 298.5,234.5 302.5,234.5 306.5,234.5 310.5,234.5 314.5,234.5 318.5,226.5 322.5,226.5 326.5,224.5 330.5,224.5 334.5,212.5 338.5,212.5 342.5,212.5 346.5,212.5 350.5,212.5 354.5,212.5 358.5,212.5 362.5,212.5 366.5,212.5 370.5,212.5 374.5,212.5 378.5,212.5 382.5,212.5 386.5,206.5 390.5,206.5 394.5,206.5 398.5,206.5 402.5,205.5 406.5,198.5 410.5,198.5 414.5,198.5 418.5,198.5 422.5,198.5 426.5,198.5 430.5,198.5 434.5,198.5 438.5,198.5 442.5,198.5 446.5,202.5 450.5,202.5 454.5,202.5 458.5,202.5 462.5,202.5 466.5,202.5 470.5,202.5 474.5,202.5 478.5,202.5 482.5,202.5 486.5,202.5 490.5,202.5 494.5,202.5 498.5,202.5 502.5,202.5 506.5,202.5 510.5,210.5 514.5,217.5 518.5,220.5 522.5,226.5 526.5,232.5 530.5,232.5 534.5,232.5 538.5,232.5 542.5,232.5 546.5,234.5 550.5,234.5 554.5,234.5 558.5,234.5 562.5,231.5 566.5,231.5 570.5,231.5 574.5,231.5 578.5,231.5 582.5,229.5 586.5,226.5 590.5,216.5 594.5,216.5 598.5,216.5 602.5,216.5 606.5,200.5 610.5,198.5 614.5,198.5 618.5,198.5 622.5,188.5 626.5,188.5 630.5,186.5 634.5,185.5 638.5,177.5" fill="none" stroke="#0000FF" stroke-width="1"/>
<polyline points="2.5,258.5 6.5,253.5 10.5,253.5 14.5,253.5 18.5,247.5 22.5,245.5 26.5,244.5 30.5,244.5 34.5,238.5 38.5,225.5 42.5,224.5 46.5,216.5 50.5,209.5 54.5,201.5 58.5,198.5 62.5,187.5 66.5,187.5 70.5,160.5 74.5,159.5 78.5,156.5 82.5,156.5 86.5,164.5 90.5,170.5 94.5,170.5 98.5,170.5 102.5,170.5 106.5,170.5 110.5,170.5 114.5,185.5 118.5,188.5 122.5,188.5 126.5,187.5 130.5,181.5 134.5,181.5 138.5,181.5 142.5,176.5 146.5,176.5 150.5,181.5 154.5,188.5 158.5,194.5 162.5,196.5 166.5,202.5 170.5,202.5 174.5,202.5 178.5,202.5 182.5,202.5 186.5,218.5 190.5,218.5 194.5,218.5 198.5,225.5 202.5,225.5 206.5,234.5 210.5,236.5 214.5,238.5 218.5,250.5 222.5,255.5 226.5,255.5 230.5,255.5 234.5,245.5 238.5,244.5 242.5,238.5 246.5,234.5 250.5,234.5 254.5,234.5 258.5,232.5 262.5,232.5 266.5,210.5 270.5,200.5 274.5,200.5 278.5,216.5 282.5,219.5 286.5,219.5 290.5,219.5 294.5,219.5 298.5,219.5 302.5,220.5 306.5,227.5 310.5,227.5 314.5,226.5 318.5,205.5 322.5,205.5 326.5,206.5 330.5,206.5 334.5,206.5 338.5,206.5 342.5,206.5 346.5,206.5 350.5,206.5 354.5,208.5 358.5,218.5 362.5,230.5 366.5,223.5 370.5,223.5 374.5,209.5 378.5,206.5 382.5,206.5 386.5,206.5 390.5,206.5 394.5,206.5 398.5,206.5 402.5,202.5 406.5,180.5 410.5,180.5 414.5,180.5 418.5,180.5 422.5,182.5 426.5,184.5 430.5,184.5 434.5,184.5 438.5,184.5 442.5,184.5 446.5,204.5 450.5,207.5 454.5,212.5 458.5,218.5 462.5,218.5 466.5,218.5 470.5,218.5 474.5,218.5 478.5,224.5 482.5,220.5 486.5,218.5 490.5,217.5 494.5,217.5 498.5,212.5 502.5,211.5 506.5,211.5 510.5,228.5 514.5,234.5 518.5,234.5 522.5,234.5 526.5,242.5 530.5,242.5 534.5,244.5 538.5,244.5 542.5,246.5 546.5,247.5 550.5,247.5 554.5,237.5 558.5,230.5 562.5,218.5 566.5,218.5 570.5,210.5 574.5,208.5 578.5,204.5 582.5,202.5 586.5,199.5 590.5,189.5 594.5,185.5 598.5,185.5 602.5,185.5 606.5,166.5 610.5,160.5 614.5,160.5 618.5,160.5 622.5,160.5 626.5,160.5 630.5,160.5 634.5,156.5 638.5,154.5" fill="none" stroke="#FF0000" stroke-width="1"/>
</g>
<g shape-rendering="crispEdges">
<rect x="1" y="234" width="3" height="15" fill="#00ff00"/><rect x="2" y="235" width="1" height="13" fill="#ffffff"/>
<rect x="6" y="219" width="1" height="15" fill="#00ff00"/><rect x="6" y="272" width="1" height="1" fill="#00ff00"/><rect x="5" y="234" width="3" height="38" fill="#00ff00"/><rect x="6" y="235" width="1" height="36" fill="#ffffff"/>
<rect x="10" y="245" width="1" height="23" fill="#00ff00"/><rect x="10" y="271" width="1" height="12" fill="#00ff00"/><rect x="9" y="268" width="3" height="3" fill="#00ff00"/><rect x="10" y="269" width="1" height="1" fill="#000000"/>
<rect x="14" y="228" width="1" height="19" fill="#00ff00"/><rect x="13" y="247" width="3" height="22" fill="#00ff00"/><rect x="14" y="248" width="1" height="20" fill="#000000"/>
<rect x="18" y="210" width="1" height="29" fill="#00ff00"/><rect x="18" y="248" width="1" height="6" fill="#00ff00"/><rect x="17" y="239" width="3" height="9" fill="#00ff00"/><rect x="18" y="240" width="1" height="7" fill="#000000"/>
<rect x="22" y="225" width="1" height="3" fill="#00ff00"/><rect x="22" y="240" width="1" height="3" fill="#00ff00"/><rect x="21" y="228" width="3" height="12" fill="#00ff00"/><rect x="22" y="229" width="1" height="10" fill="#000000"/>
<rect x="26" y="225" width="1" height="1" fill="#00ff00"/><rect x="26" y="229" width="1" height="8" fill="#00ff00"/><rect x="25" y="226" width="3" height="3" fill="#00ff00"/><rect x="26" y="227" width="1" height="1" fill="#000000"/>
<rect x="30" y="206" width="1" height="20" fill="#00ff00"/><rect x="30" y="229" width="1" height="4" fill="#00ff00"/><rect x="29" y="226" width="3" height="3" fill="#00ff00"/><rect x="30" y="227" width="1" height="1" fill="#000000"/>
<rect x="34" y="178" width="1" height="12" fill="#00ff00"/><rect x="34" y="229" width="1" height="15" fill="#00ff00"/><rect x="33" y="190" width="3" height="39" fill="#00ff00"/><rect x="34" y="191" width="1" height="37" fill="#000000"/>
<rect x="38" y="167" width="1" height="5" fill="#00ff00"/><rect x="37" y="172" width="3" height="19" fill="#00ff00"/><rect x="38" y="173" width="1" height="17" fill="#000000"/>
<rect x="42" y="165" width="1" height="3" fill="#00ff00"/><rect x="42" y="179" width="1" height="2" fill="#00ff00"/><rect x="41" y="168" width="3" height="11" fill="#00ff00"/><rect x="42" y="169" width="1" height="9" fill="#ffffff"/>
<rect x="46" y="166" width="1" height="6" fill="#00ff00"/><rect x="46" y="173" width="1" height="4" fill="#00ff00"/><rect x="45" y="172" width="3" height="1" fill="#00ff00"/>
<rect x="50" y="171" width="1" height="2" fill="#00ff00"/><rect x="50" y="185" width="1" height="2" fill="#00ff00"/><rect x="49" y="173" width="3" height="12" fill="#00ff00"/><rect x="50" y="174" width="1" height="10" fill="#ffffff"/>
<rect x="54" y="159" width="1" height="1" fill="#00ff00"/><rect x="54" y="185" width="1" height="3" fill="#00ff00"/><rect x="53" y="160" width="3" height="25" fill="#00ff00"/><rect x="54" y="161" width="1" height="23" fill="#000000"/>
<rect x="58" y="153" width="1" height="6" fill="#00ff00"/><rect x="58" y="161" width="1" height="9" fill="#00ff00"/><rect x="57" y="159" width="3" height="2" fill="#00ff00"/>
<rect x="62" y="131" width="1" height="5" fill="#00ff00"/><rect x="62" y="160" width="1" height="5" fill="#00ff00"/><rect x="61" y="136" width="3" height="24" fill="#00ff00"/><rect x="62" y="137" width="1" height="22" fill="#000000"/>
<rect x="66" y="134" width="1" height="2" fill="#00ff00"/><rect x="66" y="143" width="1" height="1" fill="#00ff00"/><rect x="65" y="136" width="3" height="7" fill="#00ff00"/><rect x="66" y="137" width="1" height="5" fill="#ffffff"/>
<rect x="70" y="136" width="1" height="5" fill="#00ff00"/><rect x="70" y="147" width="1" height="2" fill="#00ff00"/><rect x="69" y="141" width="3" height="6" fill="#00ff00"/><rect x="70" y="142" width="1" height="4" fill="#ffffff"/>
<rect x="74" y="136" width="1" height="7" fill="#00ff00"/><rect x="74" y="147" width="1" height="2" fill="#00ff00"/><rect x="73" y="143" width="3" height="4" fill="#00ff00"/><rect x="74" y="144" width="1" height="2" fill="#000000"/>
<rect x="78" y="125" width="1" height="18" fill="#00ff00"/><rect x="78" y="156" width="1" height="9" fill="#00ff00"/><rect x="77" y="143" width="3" height="13" fill="#00ff00"/><rect x="78" y="144" width="1" height="11" fill="#ffffff"/>
<rect x="82" y="156" width="1" height="3" fill="#00ff00"/><rect x="82" y="179" width="1" height="1" fill="#00ff00"/><rect x="81" y="159" width="3" height="20" fill="#00ff00"/><rect x="82" y="160" width="1" height="18" fill="#ffffff"/>
<rect x="86" y="175" width="1" height="1" fill="#00ff00"/><rect x="86" y="202" width="1" height="1" fill="#00ff00"/><rect x="85" y="176" width="3" height="26" fill="#00ff00"/><rect x="86" y="177" width="1" height="24" fill="#ffffff"/>
<rect x="90" y="200" width="1" height="1" fill="#00ff00"/><rect x="90" y="205" width="1" height="10" fill="#00ff00"/><rect x="89" y="201" width="3" height="4" fill="#00ff00"/><rect x="90" y="202" width="1" height="2" fill="#ffffff"/>
<rect x="94" y="202" width="1" height="2" fill="#00ff00"/><rect x="94" y="205" width="1" height="8" fill="#00ff00"/><rect x="93" y="204" width="3" height="1" fill="#00ff00"/>
<rect x="98" y="194" width="1" height="2" fill="#00ff00"/><rect x="98" y="207" width="1" height="2" fill="#00ff00"/><rect x="97" y="196" width="3" height="11" fill="#00ff00"/><rect x="98" y="197" width="1" height="9" fill="#000000"/>
<rect x="102" y="173" width="1" height="20" fill="#00ff00"/><rect x="102" y="197" width="1" height="4" fill="#00ff00"/><rect x="101" y="193" width="3" height="4" fill="#00ff00"/><rect x="102" y="194" width="1" height="2" fill="#000000"/>
<rect x="106" y="162" width="1" height="10" fill="#00ff00"/><rect x="106" y="195" width="1" height="14" fill="#00ff00"/><rect x="105" y="172" width="3" height="23" fill="#00ff00"/><rect x="106" y="173" width="1" height="21" fill="#000000"/>
<rect x="110" y="171" width="1" height="1" fill="#00ff00"/><rect x="110" y="187" width="1" height="2" fill="#00ff00"/><rect x="109" y="172" width="3" height="15" fill="#00ff00"/><rect x="110" y="173" width="1" height="13" fill="#ffffff"/>
<rect x="114" y="183" width="1" height="1" fill="#00ff00"/><rect x="114" y="197" width="1" height="1" fill="#00ff00"/><rect x="113" y="184" width="3" height="13" fill="#00ff00"/><rect x="114" y="185" width="1" height="11" fill="#ffffff"/>
<rect x="118" y="179" width="1" height="8" fill="#00ff00"/><rect x="118" y="198" width="1" height="1" fill="#00ff00"/><rect x="117" y="187" width="3" height="11" fill="#00ff00"/><rect x="118" y="188" width="1" height="9" fill="#000000"/>
<rect x="122" y="179" width="1" height="1" fill="#00ff00"/><rect x="122" y="188" width="1" height="1" fill="#00ff00"/><rect x="121" y="180" width="3" height="8" fill="#00ff00"/><rect x="122" y="181" width="1" height="6" fill="#000000"/>
<rect x="126" y="172" width="1" height="5" fill="#00ff00"/><rect x="126" y="182" width="1" height="3" fill="#00ff00"/><rect x="125" y="177" width="3" height="5" fill="#00ff00"/><rect x="126" y="178" width="1" height="3" fill="#000000"/>
<rect x="130" y="154" width="1" height="26" fill="#00ff00"/><rect x="130" y="181" width="1" height="3" fill="#00ff00"/><rect x="129" y="180" width="3" height="1" fill="#00ff00"/>
<rect x="134" y="170" width="1" height="5" fill="#00ff00"/><rect x="134" y="181" width="1" height="8" fill="#00ff00"/><rect x="133" y="175" width="3" height="6" fill="#00ff00"/><rect x="134" y="176" width="1" height="4" fill="#000000"/>
<rect x="138" y="174" width="1" height="1" fill="#00ff00"/><rect x="138" y="180" width="1" height="3" fill="#00ff00"/><rect x="137" y="175" width="3" height="5" fill="#00ff00"/><rect x="138" y="176" width="1" height="3" fill="#ffffff"/>
<rect x="142" y="174" width="1" height="3" fill="#00ff00"/><rect x="142" y="183" width="1" height="1" fill="#00ff00"/><rect x="141" y="177" width="3" height="6" fill="#00ff00"/><rect x="142" y="178" width="1" height="4" fill="#000000"/>
<rect x="146" y="168" width="1" height="2" fill="#00ff00"/><rect x="146" y="177" width="1" height="4" fill="#00ff00"/><rect x="145" y="170" width="3" height="7" fill="#00ff00"/><rect x="146" y="171" width="1" height="5" fill="#000000"/>
<rect x="150" y="165" width="1" height="4" fill="#00ff00"/><rect x="150" y="203" width="1" height="6" fill="#00ff00"/><rect x="149" y="169" width="3" height="34" fill="#00ff00"/><rect x="150" y="170" width="1" height="32" fill="#ffffff"/>
<rect x="154" y="196" width="1" height="5" fill="#00ff00"/><rect x="154" y="222" width="1" height="1" fill="#00ff00"/><rect x="153" y="201" width="3" height="21" fill="#00ff00"/><rect x="154" y="202" width="1" height="19" fill="#ffffff"/>
<rect x="158" y="219" width="1" height="1" fill="#00ff00"/><rect x="158" y="235" width="1" height="1" fill="#00ff00"/><rect x="157" y="220" width="3" height="15" fill="#00ff00"/><rect x="158" y="221" width="1" height="13" fill="#000000"/>
<rect x="162" y="230" width="1" height="2" fill="#00ff00"/><rect x="162" y="233" width="1" height="6" fill="#00ff00"/><rect x="161" y="232" width="3" height="1" fill="#00ff00"/>
<rect x="166" y="226" width="1" height="1" fill="#00ff00"/><rect x="166" y="237" width="1" height="3" fill="#00ff00"/><rect x="165" y="227" width="3" height="10" fill="#00ff00"/><rect x="166" y="228" width="1" height="8" fill="#ffffff"/>
<rect x="170" y="216" width="1" height="6" fill="#00ff00"/><rect x="170" y="236" width="1" height="1" fill="#00ff00"/><rect x="169" y="222" width="3" height="14" fill="#00ff00"/><rect x="170" y="223" width="1" height="12" fill="#000000"/>
<rect x="174" y="196" width="1" height="7" fill="#00ff00"/><rect x="174" y="223" width="1" height="1" fill="#00ff00"/><rect x="173" y="203" width="3" height="20" fill="#00ff00"/><rect x="174" y="204" width="1" height="18" fill="#000000"/>
<rect x="178" y="196" width="1" height="5" fill="#00ff00"/><rect x="178" y="209" width="1" height="2" fill="#00ff00"/><rect x="177" y="201" width="3" height="8" fill="#00ff00"/><rect x="178" y="202" width="1" height="6" fill="#ffffff"/>
<rect x="182" y="200" width="1" height="8" fill="#00ff00"/><rect x="182" y="223" width="1" height="8" fill="#00ff00"/><rect x="181" y="208" width="3" height="15" fill="#00ff00"/><rect x="182" y="209" width="1" height="13" fill="#ffffff"/>
<rect x="186" y="226" width="1" height="3" fill="#00ff00"/><rect x="186" y="241" width="1" height="1" fill="#00ff00"/><rect x="185" y="229" width="3" height="12" fill="#00ff00"/><rect x="186" y="230" width="1" height="10" fill="#ffffff"/>
<rect x="190" y="230" width="1" height="6" fill="#00ff00"/><rect x="190" y="241" width="1" height="1" fill="#00ff00"/><rect x="189" y="236" width="3" height="5" fill="#00ff00"/><rect x="190" y="237" width="1" height="3" fill="#000000"/>
<rect x="194" y="224" width="1" height="4" fill="#00ff00"/><rect x="194" y="239" width="1" height="2" fill="#00ff00"/><rect x="193" y="228" width="3" height="11" fill="#00ff00"/><rect x="194" y="229" width="1" height="9" fill="#000000"/>
<rect x="198" y="224" width="1" height="2" fill="#00ff00"/><rect x="198" y="248" width="1" height="7" fill="#00ff00"/><rect x="197" y="226" width="3" height="22" fill="#00ff00"/><rect x="198" y="227" width="1" height="20" fill="#ffffff"/>
<rect x="202" y="231" width="1" height="12" fill="#00ff00"/><rect x="202" y="253" width="1" height="2" fill="#00ff00"/><rect x="201" y="243" width="3" height="10" fill="#00ff00"/><rect x="202" y="244" width="1" height="8" fill="#000000"/>
<rect x="206" y="236" width="1" height="7" fill="#00ff00"/><rect x="206" y="273" width="1" height="1" fill="#00ff00"/><rect x="205" y="243" width="3" height="30" fill="#00ff00"/><rect x="206" y="244" width="1" height="28" fill="#ffffff"/>
<rect x="210" y="257" width="1" height="14" fill="#00ff00"/><rect x="210" y="272" width="1" height="4" fill="#00ff00"/><rect x="209" y="271" width="3" height="1" fill="#00ff00"/>
<rect x="214" y="261" width="1" height="7" fill="#00ff00"/><rect x="214" y="272" width="1" height="1" fill="#00ff00"/><rect x="213" y="268" width="3" height="4" fill="#00ff00"/><rect x="214" y="269" width="1" height="2" fill="#ffffff"/>
<rect x="218" y="261" width="1" height="1" fill="#00ff00"/><rect x="218" y="270" width="1" height="1" fill="#00ff00"/><rect x="217" y="262" width="3" height="8" fill="#00ff00"/><rect x="218" y="263" width="1" height="6" fill="#000000"/>
<rect x="222" y="258" width="1" height="5" fill="#00ff00"/><rect x="222" y="275" width="1" height="12" fill="#00ff00"/><rect x="221" y="263" width="3" height="12" fill="#00ff00"/><rect x="222" y="264" width="1" height="10" fill="#ffffff"/>
<rect x="226" y="264" width="1" height="5" fill="#00ff00"/><rect x="226" y="277" width="1" height="3" fill="#00ff00"/><rect x="225" y="269" width="3" height="8" fill="#00ff00"/><rect x="226" y="270" width="1" height="6" fill="#000000"/>
<rect x="230" y="224" width="1" height="1" fill="#00ff00"/><rect x="230" y="269" width="1" height="14" fill="#00ff00"/><rect x="229" y="225" width="3" height="44" fill="#00ff00"/><rect x="230" y="226" width="1" height="42" fill="#000000"/>
<rect x="234" y="204" width="1" height="4" fill="#00ff00"/><rect x="234" y="225" width="1" height="15" fill="#00ff00"/><rect x="233" y="208" width="3" height="17" fill="#00ff00"/><rect x="234" y="209" width="1" height="15" fill="#000000"/>
<rect x="238" y="203" width="1" height="2" fill="#00ff00"/><rect x="238" y="209" width="1" height="3" fill="#00ff00"/><rect x="237" y="205" width="3" height="4" fill="#00ff00"/><rect x="238" y="206" width="1" height="2" fill="#000000"/>
<rect x="242" y="190" width="1" height="2" fill="#00ff00"/><rect x="242" y="205" width="1" height="1" fill="#00ff00"/><rect x="241" y="192" width="3" height="13" fill="#00ff00"/><rect x="242" y="193" width="1" height="11" fill="#000000"/>
<rect x="246" y="183" width="1" height="9" fill="#00ff00"/><rect x="246" y="206" width="1" height="6" fill="#00ff00"/><rect x="245" y="192" width="3" height="14" fill="#00ff00"/><rect x="246" y="193" width="1" height="12" fill="#ffffff"/>
<rect x="250" y="182" width="1" height="22" fill="#00ff00"/><rect x="250" y="205" width="1" height="16" fill="#00ff00"/><rect x="249" y="204" width="3" height="1" fill="#00ff00"/>
<rect x="254" y="181" width="1" height="22" fill="#00ff00"/><rect x="254" y="204" width="1" height="11" fill="#00ff00"/><rect x="253" y="203" width="3" height="1" fill="#00ff00"/>
<rect x="258" y="186" width="1" height="1" fill="#00ff00"/><rect x="258" y="203" width="1" height="10" fill="#00ff00"/><rect x="257" y="187" width="3" height="16" fill="#00ff00"/><rect x="258" y="188" width="1" height="14" fill="#000000"/>
<rect x="262" y="184" width="1" height="4" fill="#00ff00"/><rect x="262" y="190" width="1" height="4" fill="#00ff00"/><rect x="261" y="188" width="3" height="2" fill="#00ff00"/>
<rect x="266" y="181" width="1" height="7" fill="#00ff00"/><rect x="266" y="191" width="1" height="14" fill="#00ff00"/><rect x="265" y="188" width="3" height="3" fill="#00ff00"/><rect x="266" y="189" width="1" height="1" fill="#000000"/>
<rect x="270" y="183" width="1" height="6" fill="#00ff00"/><rect x="270" y="205" width="1" height="2" fill="#00ff00"/><rect x="269" y="189" width="3" height="16" fill="#00ff00"/><rect x="270" y="190" width="1" height="14" fill="#ffffff"/>
<rect x="274" y="199" width="1" height="5" fill="#00ff00"/><rect x="274" y="217" width="1" height="1" fill="#00ff00"/><rect x="273" y="204" width="3" height="13" fill="#00ff00"/><rect x="274" y="205" width="1" height="11" fill="#ffffff"/>
<rect x="278" y="210" width="1" height="7" fill="#00ff00"/><rect x="278" y="250" width="1" height="2" fill="#00ff00"/><rect x="277" y="217" width="3" height="33" fill="#00ff00"/><rect x="278" y="218" width="1" height="31" fill="#ffffff"/>
<rect x="282" y="242" width="1" height="5" fill="#00ff00"/><rect x="282" y="250" width="1" height="8" fill="#00ff00"/><rect x="281" y="247" width="3" height="3" fill="#00ff00"/><rect x="282" y="248" width="1" height="1" fill="#000000"/>
<rect x="286" y="206" width="1" height="13" fill="#00ff00"/><rect x="286" y="231" width="1" height="8" fill="#00ff00"/><rect x="285" y="219" width="3" height="12" fill="#00ff00"/><rect x="286" y="220" width="1" height="10" fill="#000000"/>
<rect x="290" y="205" width="1" height="1" fill="#00ff00"/><rect x="290" y="231" width="1" height="1" fill="#00ff00"/><rect x="289" y="206" width="3" height="25" fill="#00ff00"/><rect x="290" y="207" width="1" height="23" fill="#000000"/>
<rect x="294" y="197" width="1" height="10" fill="#00ff00"/><rect x="294" y="211" width="1" height="4" fill="#00ff00"/><rect x="293" y="207" width="3" height="4" fill="#00ff00"/><rect x="294" y="208" width="1" height="2" fill="#000000"/>
<rect x="298" y="206" width="1" height="2" fill="#00ff00"/><rect x="298" y="241" width="1" height="4" fill="#00ff00"/><rect x="297" y="208" width="3" height="33" fill="#00ff00"/><rect x="298" y="209" width="1" height="31" fill="#ffffff"/>
<rect x="302" y="208" width="1" height="9" fill="#00ff00"/><rect x="302" y="241" width="1" height="1" fill="#00ff00"/><rect x="301" y="217" width="3" height="24" fill="#00ff00"/><rect x="302" y="218" width="1" height="22" fill="#000000"/>
<rect x="306" y="216" width="1" height="4" fill="#00ff00"/><rect x="306" y="225" width="1" height="6" fill="#00ff00"/><rect x="305" y="220" width="3" height="5" fill="#00ff00"/><rect x="306" y="221" width="1" height="3" fill="#000000"/>
<rect x="310" y="206" width="1" height="1" fill="#00ff00"/><rect x="310" y="220" width="1" height="1" fill="#00ff00"/><rect x="309" y="207" width="3" height="13" fill="#00ff00"/><rect x="310" y="208" width="1" height="11" fill="#000000"/>
<rect x="314" y="196" width="1" height="6" fill="#00ff00"/><rect x="314" y="208" width="1" height="1" fill="#00ff00"/><rect x="313" y="202" width="3" height="6" fill="#00ff00"/><rect x="314" y="203" width="1" height="4" fill="#000000"/>
<rect x="318" y="166" width="1" height="7" fill="#00ff00"/><rect x="318" y="205" width="1" height="2" fill="#00ff00"/><rect x="317" y="173" width="3" height="32" fill="#00ff00"/><rect x="318" y="174" width="1" height="30" fill="#000000"/>
<rect x="322" y="168" width="1" height="5" fill="#00ff00"/><rect x="322" y="186" width="1" height="9" fill="#00ff00"/><rect x="321" y="173" width="3" height="13" fill="#00ff00"/><rect x="322" y="174" width="1" height="11" fill="#ffffff"/>
<rect x="326" y="188" width="1" height="1" fill="#00ff00"/><rect x="326" y="225" width="1" height="21" fill="#00ff00"/><rect x="325" y="189" width="3" height="36" fill="#00ff00"/><rect x="326" y="190" width="1" height="34" fill="#ffffff"/>
<rect x="330" y="224" width="1" height="1" fill="#00ff00"/><rect x="330" y="228" width="1" height="1" fill="#00ff00"/><rect x="329" y="225" width="3" height="3" fill="#00ff00"/><rect x="330" y="226" width="1" height="1" fill="#000000"/>
<rect x="334" y="226" width="1" height="1" fill="#00ff00"/><rect x="334" y="233" width="1" height="1" fill="#00ff00"/><rect x="333" y="227" width="3" height="6" fill="#00ff00"/><rect x="334" y="228" width="1" height="4" fill="#000000"/>
<rect x="338" y="230" width="1" height="1" fill="#00ff00"/><rect x="338" y="246" width="1" height="1" fill="#00ff00"/><rect x="337" y="231" width="3" height="15" fill="#00ff00"/><rect x="338" y="232" width="1" height="13" fill="#ffffff"/>
<rect x="342" y="228" width="1" height="1" fill="#00ff00"/><rect x="342" y="247" width="1" height="1" fill="#00ff00"/><rect x="341" y="229" width="3" height="18" fill="#00ff00"/><rect x="342" y="230" width="1" height="16" fill="#ffffff"/>
<rect x="346" y="212" width="1" height="4" fill="#00ff00"/><rect x="346" y="223" width="1" height="12" fill="#00ff00"/><rect x="345" y="216" width="3" height="7" fill="#00ff00"/><rect x="346" y="217" width="1" height="5" fill="#000000"/>
<rect x="350" y="213" width="1" height="2" fill="#00ff00"/><rect x="350" y="222" width="1" height="14" fill="#00ff00"/><rect x="349" y="215" width="3" height="7" fill="#00ff00"/><rect x="350" y="216" width="1" height="5" fill="#ffffff"/>
<rect x="354" y="219" width="1" height="1" fill="#00ff00"/><rect x="354" y="227" width="1" height="6" fill="#00ff00"/><rect x="353" y="220" width="3" height="7" fill="#00ff00"/><rect x="354" y="221" width="1" height="5" fill="#ffffff"/>
<rect x="358" y="218" width="1" height="4" fill="#00ff00"/><rect x="358" y="226" width="1" height="3" fill="#00ff00"/><rect x="357" y="222" width="3" height="4" fill="#00ff00"/><rect x="358" y="223" width="1" height="2" fill="#000000"/>
<rect x="362" y="218" width="1" height="4" fill="#00ff00"/><rect x="362" y="227" width="1" height="2" fill="#00ff00"/><rect x="361" y="222" width="3" height="5" fill="#00ff00"/><rect x="362" y="223" width="1" height="3" fill="#000000"/>
<rect x="366" y="199" width="1" height="24" fill="#00ff00"/><rect x="366" y="229" width="1" height="14" fill="#00ff00"/><rect x="365" y="223" width="3" height="6" fill="#00ff00"/><rect x="366" y="224" width="1" height="4" fill="#000000"/>
<rect x="370" y="210" width="1" height="2" fill="#00ff00"/><rect x="370" y="224" width="1" height="19" fill="#00ff00"/><rect x="369" y="212" width="3" height="12" fill="#00ff00"/><rect x="370" y="213" width="1" height="10" fill="#000000"/>
<rect x="374" y="171" width="1" height="21" fill="#00ff00"/><rect x="374" y="205" width="1" height="1" fill="#00ff00"/><rect x="373" y="192" width="3" height="13" fill="#00ff00"/><rect x="374" y="193" width="1" height="11" fill="#000000"/>
<rect x="378" y="188" width="1" height="4" fill="#00ff00"/><rect x="378" y="206" width="1" height="1" fill="#00ff00"/><rect x="377" y="192" width="3" height="14" fill="#00ff00"/><rect x="378" y="193" width="1" height="12" fill="#ffffff"/>
<rect x="382" y="196" width="1" height="4" fill="#00ff00"/><rect x="382" y="205" width="1" height="3" fill="#00ff00"/><rect x="381" y="200" width="3" height="5" fill="#00ff00"/><rect x="382" y="201" width="1" height="3" fill="#000000"/>
<rect x="386" y="195" width="1" height="5" fill="#00ff00"/><rect x="386" y="208" width="1" height="3" fill="#00ff00"/><rect x="385" y="200" width="3" height="8" fill="#00ff00"/><rect x="386" y="201" width="1" height="6" fill="#ffffff"/>
<rect x="390" y="195" width="1" height="3" fill="#00ff00"/><rect x="390" y="201" width="1" height="2" fill="#00ff00"/><rect x="389" y="198" width="3" height="3" fill="#00ff00"/><rect x="390" y="199" width="1" height="1" fill="#000000"/>
<rect x="394" y="169" width="1" height="21" fill="#00ff00"/><rect x="394" y="197" width="1" height="6" fill="#00ff00"/><rect x="393" y="190" width="3" height="7" fill="#00ff00"/><rect x="394" y="191" width="1" height="5" fill="#000000"/>
<rect x="398" y="180" width="1" height="4" fill="#00ff00"/><rect x="398" y="191" width="1" height="2" fill="#00ff00"/><rect x="397" y="184" width="3" height="7" fill="#00ff00"/><rect x="398" y="185" width="1" height="5" fill="#000000"/>
<rect x="402" y="163" width="1" height="17" fill="#00ff00"/><rect x="402" y="187" width="1" height="2" fill="#00ff00"/><rect x="401" y="180" width="3" height="7" fill="#00ff00"/><rect x="402" y="181" width="1" height="5" fill="#000000"/>
<rect x="406" y="150" width="1" height="2" fill="#00ff00"/><rect x="406" y="188" width="1" height="1" fill="#00ff00"/><rect x="405" y="152" width="3" height="36" fill="#00ff00"/><rect x="406" y="153" width="1" height="34" fill="#000000"/>
<rect x="410" y="150" width="1" height="2" fill="#00ff00"/><rect x="410" y="154" width="1" height="6" fill="#00ff00"/><rect x="409" y="152" width="3" height="2" fill="#00ff00"/>
<rect x="414" y="152" width="1" height="1" fill="#00ff00"/><rect x="414" y="172" width="1" height="5" fill="#00ff00"/><rect x="413" y="153" width="3" height="19" fill="#00ff00"/><rect x="414" y="154" width="1" height="17" fill="#ffffff"/>
<rect x="418" y="159" width="1" height="13" fill="#00ff00"/><rect x="418" y="173" width="1" height="8" fill="#00ff00"/><rect x="417" y="172" width="3" height="1" fill="#00ff00"/>
<rect x="422" y="169" width="1" height="3" fill="#00ff00"/><rect x="422" y="213" width="1" height="1" fill="#00ff00"/><rect x="421" y="172" width="3" height="41" fill="#00ff00"/><rect x="422" y="173" width="1" height="39" fill="#ffffff"/>
<rect x="426" y="210" width="1" height="1" fill="#00ff00"/><rect x="426" y="218" width="1" height="1" fill="#00ff00"/><rect x="425" y="211" width="3" height="7" fill="#00ff00"/><rect x="426" y="212" width="1" height="5" fill="#000000"/>
<rect x="430" y="208" width="1" height="1" fill="#00ff00"/><rect x="430" y="217" width="1" height="1" fill="#00ff00"/><rect x="429" y="209" width="3" height="8" fill="#00ff00"/><rect x="430" y="210" width="1" height="6" fill="#000000"/>
<rect x="434" y="202" width="1" height="2" fill="#00ff00"/><rect x="434" y="212" width="1" height="1" fill="#00ff00"/><rect x="433" y="204" width="3" height="8" fill="#00ff00"/><rect x="434" y="205" width="1" height="6" fill="#000000"/>
<rect x="438" y="191" width="1" height="4" fill="#00ff00"/><rect x="438" y="207" width="1" height="1" fill="#00ff00"/><rect x="437" y="195" width="3" height="12" fill="#00ff00"/><rect x="438" y="196" width="1" height="10" fill="#000000"/>
<rect x="442" y="181" width="1" height="13" fill="#00ff00"/><rect x="442" y="207" width="1" height="1" fill="#00ff00"/><rect x="441" y="194" width="3" height="13" fill="#00ff00"/><rect x="442" y="195" width="1" height="11" fill="#ffffff"/>
<rect x="446" y="203" width="1" height="1" fill="#00ff00"/><rect x="446" y="245" width="1" height="11" fill="#00ff00"/><rect x="445" y="204" width="3" height="41" fill="#00ff00"/><rect x="446" y="205" width="1" height="39" fill="#ffffff"/>
<rect x="450" y="239" width="1" height="5" fill="#00ff00"/><rect x="450" y="249" width="1" height="1" fill="#00ff00"/><rect x="449" y="244" width="3" height="5" fill="#00ff00"/><rect x="450" y="245" width="1" height="3" fill="#000000"/>
<rect x="454" y="234" width="1" height="1" fill="#00ff00"/><rect x="454" y="249" width="1" height="1" fill="#00ff00"/><rect x="453" y="235" width="3" height="14" fill="#00ff00"/><rect x="454" y="236" width="1" height="12" fill="#000000"/>
<rect x="458" y="233" width="1" height="1" fill="#00ff00"/><rect x="458" y="241" width="1" height="8" fill="#00ff00"/><rect x="457" y="234" width="3" height="7" fill="#00ff00"/><rect x="458" y="235" width="1" height="5" fill="#000000"/>
<rect x="462" y="231" width="1" height="2" fill="#00ff00"/><rect x="462" y="237" width="1" height="12" fill="#00ff00"/><rect x="461" y="233" width="3" height="4" fill="#00ff00"/><rect x="462" y="234" width="1" height="2" fill="#000000"/>
<rect x="466" y="211" width="1" height="2" fill="#00ff00"/><rect x="466" y="234" width="1" height="6" fill="#00ff00"/><rect x="465" y="213" width="3" height="21" fill="#00ff00"/><rect x="466" y="214" width="1" height="19" fill="#000000"/>
<rect x="470" y="198" width="1" height="1" fill="#00ff00"/><rect x="470" y="215" width="1" height="5" fill="#00ff00"/><rect x="469" y="199" width="3" height="16" fill="#00ff00"/><rect x="470" y="200" width="1" height="14" fill="#000000"/>
<rect x="474" y="192" width="1" height="6" fill="#00ff00"/><rect x="474" y="207" width="1" height="2" fill="#00ff00"/><rect x="473" y="198" width="3" height="9" fill="#00ff00"/><rect x="474" y="199" width="1" height="7" fill="#ffffff"/>
<rect x="478" y="200" width="1" height="6" fill="#00ff00"/><rect x="478" y="207" width="1" height="2" fill="#00ff00"/><rect x="477" y="206" width="3" height="1" fill="#00ff00"/>
<rect x="482" y="203" width="1" height="4" fill="#00ff00"/><rect x="482" y="208" width="1" height="2" fill="#00ff00"/><rect x="481" y="207" width="3" height="1" fill="#00ff00"/>
<rect x="486" y="186" width="1" height="17" fill="#00ff00"/><rect x="486" y="209" width="1" height="3" fill="#00ff00"/><rect x="485" y="203" width="3" height="6" fill="#00ff00"/><rect x="486" y="204" width="1" height="4" fill="#000000"/>
<rect x="490" y="187" width="1" height="13" fill="#00ff00"/><rect x="490" y="225" width="1" height="5" fill="#00ff00"/><rect x="489" y="200" width="3" height="25" fill="#00ff00"/><rect x="490" y="201" width="1" height="23" fill="#ffffff"/>
<rect x="494" y="205" width="1" height="3" fill="#00ff00"/><rect x="494" y="225" width="1" height="12" fill="#00ff00"/><rect x="493" y="208" width="3" height="17" fill="#00ff00"/><rect x="494" y="209" width="1" height="15" fill="#000000"/>
<rect x="498" y="203" width="1" height="4" fill="#00ff00"/><rect x="498" y="217" width="1" height="2" fill="#00ff00"/><rect x="497" y="207" width="3" height="10" fill="#00ff00"/><rect x="498" y="208" width="1" height="8" fill="#000000"/>
<rect x="502" y="206" width="1" height="4" fill="#00ff00"/><rect x="502" y="216" width="1" height="1" fill="#00ff00"/><rect x="501" y="210" width="3" height="6" fill="#00ff00"/><rect x="502" y="211" width="1" height="4" fill="#000000"/>
<rect x="506" y="206" width="1" height="4" fill="#00ff00"/><rect x="506" y="212" width="1" height="1" fill="#00ff00"/><rect x="505" y="210" width="3" height="2" fill="#00ff00"/>
<rect x="510" y="211" width="1" height="1" fill="#00ff00"/><rect x="510" y="266" width="1" height="5" fill="#00ff00"/><rect x="509" y="212" width="3" height="54" fill="#00ff00"/><rect x="510" y="213" width="1" height="52" fill="#ffffff"/>
<rect x="514" y="254" width="1" height="11" fill="#00ff00"/><rect x="514" y="282" width="1" height="1" fill="#00ff00"/><rect x="513" y="265" width="3" height="17" fill="#00ff00"/><rect x="514" y="266" width="1" height="15" fill="#ffffff"/>
<rect x="518" y="254" width="1" height="4" fill="#00ff00"/><rect x="518" y="282" width="1" height="1" fill="#00ff00"/><rect x="517" y="258" width="3" height="24" fill="#00ff00"/><rect x="518" y="259" width="1" height="22" fill="#000000"/>
<rect x="522" y="252" width="1" height="6" fill="#00ff00"/><rect x="522" y="261" width="1" height="2" fill="#00ff00"/><rect x="521" y="258" width="3" height="3" fill="#00ff00"/><rect x="522" y="259" width="1" height="1" fill="#000000"/>
<rect x="526" y="250" width="1" height="2" fill="#00ff00"/><rect x="526" y="257" width="1" height="6" fill="#00ff00"/><rect x="525" y="252" width="3" height="5" fill="#00ff00"/><rect x="526" y="253" width="1" height="3" fill="#000000"/>
<rect x="530" y="246" width="1" height="4" fill="#00ff00"/><rect x="530" y="255" width="1" height="2" fill="#00ff00"/><rect x="529" y="250" width="3" height="5" fill="#00ff00"/><rect x="530" y="251" width="1" height="3" fill="#000000"/>
<rect x="534" y="234" width="1" height="2" fill="#00ff00"/><rect x="534" y="255" width="1" height="1" fill="#00ff00"/><rect x="533" y="236" width="3" height="19" fill="#00ff00"/><rect x="534" y="237" width="1" height="17" fill="#000000"/>
<rect x="538" y="217" width="1" height="4" fill="#00ff00"/><rect x="538" y="239" width="1" height="1" fill="#00ff00"/><rect x="537" y="221" width="3" height="18" fill="#00ff00"/><rect x="538" y="222" width="1" height="16" fill="#000000"/>
<rect x="542" y="217" width="1" height="2" fill="#00ff00"/><rect x="542" y="222" width="1" height="15" fill="#00ff00"/><rect x="541" y="219" width="3" height="3" fill="#00ff00"/><rect x="542" y="220" width="1" height="1" fill="#000000"/>
<rect x="546" y="212" width="1" height="7" fill="#00ff00"/><rect x="546" y="223" width="1" height="3" fill="#00ff00"/><rect x="545" y="219" width="3" height="4" fill="#00ff00"/><rect x="546" y="220" width="1" height="2" fill="#000000"/>
<rect x="550" y="212" width="1" height="2" fill="#00ff00"/><rect x="550" y="223" width="1" height="5" fill="#00ff00"/><rect x="549" y="214" width="3" height="9" fill="#00ff00"/><rect x="550" y="215" width="1" height="7" fill="#000000"/>
<rect x="554" y="212" width="1" height="1" fill="#00ff00"/><rect x="554" y="225" width="1" height="1" fill="#00ff00"/><rect x="553" y="213" width="3" height="12" fill="#00ff00"/><rect x="554" y="214" width="1" height="10" fill="#ffffff"/>
<rect x="558" y="197" width="1" height="7" fill="#00ff00"/><rect x="558" y="225" width="1" height="4" fill="#00ff00"/><rect x="557" y="204" width="3" height="21" fill="#00ff00"/><rect x="558" y="205" width="1" height="19" fill="#000000"/>
<rect x="562" y="180" width="1" height="17" fill="#00ff00"/><rect x="562" y="204" width="1" height="2" fill="#00ff00"/><rect x="561" y="197" width="3" height="7" fill="#00ff00"/><rect x="562" y="198" width="1" height="5" fill="#000000"/>
<rect x="566" y="199" width="1" height="2" fill="#00ff00"/><rect x="566" y="214" width="1" height="1" fill="#00ff00"/><rect x="565" y="201" width="3" height="13" fill="#00ff00"/><rect x="566" y="202" width="1" height="11" fill="#000000"/>
<rect x="570" y="194" width="1" height="6" fill="#00ff00"/><rect x="570" y="215" width="1" height="6" fill="#00ff00"/><rect x="569" y="200" width="3" height="15" fill="#00ff00"/><rect x="570" y="201" width="1" height="13" fill="#000000"/>
<rect x="574" y="191" width="1" height="5" fill="#00ff00"/><rect x="573" y="196" width="3" height="19" fill="#00ff00"/><rect x="574" y="197" width="1" height="17" fill="#000000"/>
<rect x="578" y="188" width="1" height="2" fill="#00ff00"/><rect x="577" y="190" width="3" height="8" fill="#00ff00"/><rect x="578" y="191" width="1" height="6" fill="#000000"/>
<rect x="582" y="176" width="1" height="15" fill="#00ff00"/><rect x="582" y="192" width="1" height="6" fill="#00ff00"/><rect x="581" y="191" width="3" height="1" fill="#00ff00"/>
<rect x="586" y="170" width="1" height="10" fill="#00ff00"/><rect x="586" y="196" width="1" height="1" fill="#00ff00"/><rect x="585" y="180" width="3" height="16" fill="#00ff00"/><rect x="586" y="181" width="1" height="14" fill="#000000"/>
<rect x="590" y="150" width="1" height="12" fill="#00ff00"/><rect x="590" y="181" width="1" height="2" fill="#00ff00"/><rect x="589" y="162" width="3" height="19" fill="#00ff00"/><rect x="590" y="163" width="1" height="17" fill="#000000"/>
<rect x="594" y="151" width="1" height="11" fill="#00ff00"/><rect x="593" y="162" width="3" height="25" fill="#00ff00"/><rect x="594" y="163" width="1" height="23" fill="#ffffff"/>
<rect x="598" y="194" width="1" height="1" fill="#00ff00"/><rect x="598" y="199" width="1" height="7" fill="#00ff00"/><rect x="597" y="195" width="3" height="4" fill="#00ff00"/><rect x="598" y="196" width="1" height="2" fill="#000000"/>
<rect x="602" y="188" width="1" height="2" fill="#00ff00"/><rect x="602" y="197" width="1" height="2" fill="#00ff00"/><rect x="601" y="190" width="3" height="7" fill="#00ff00"/><rect x="602" y="191" width="1" height="5" fill="#000000"/>
<rect x="606" y="118" width="1" height="2" fill="#00ff00"/><rect x="606" y="192" width="1" height="2" fill="#00ff00"/><rect x="605" y="120" width="3" height="72" fill="#00ff00"/><rect x="606" y="121" width="1" height="70" fill="#000000"/>
<rect x="610" y="115" width="1" height="5" fill="#00ff00"/><rect x="610" y="147" width="1" height="2" fill="#00ff00"/><rect x="609" y="120" width="3" height="27" fill="#00ff00"/><rect x="610" y="121" width="1" height="25" fill="#ffffff"/>
<rect x="614" y="133" width="1" height="2" fill="#00ff00"/><rect x="614" y="148" width="1" height="33" fill="#00ff00"/><rect x="613" y="135" width="3" height="13" fill="#00ff00"/><rect x="614" y="136" width="1" height="11" fill="#000000"/>
<rect x="618" y="118" width="1" height="17" fill="#00ff00"/><rect x="618" y="148" width="1" height="1" fill="#00ff00"/><rect x="617" y="135" width="3" height="13" fill="#00ff00"/><rect x="618" y="136" width="1" height="11" fill="#ffffff"/>
<rect x="622" y="133" width="1" height="8" fill="#00ff00"/><rect x="622" y="148" width="1" height="1" fill="#00ff00"/><rect x="621" y="141" width="3" height="7" fill="#00ff00"/><rect x="622" y="142" width="1" height="5" fill="#000000"/>
<rect x="626" y="138" width="1" height="3" fill="#00ff00"/><rect x="626" y="148" width="1" height="1" fill="#00ff00"/><rect x="625" y="141" width="3" height="7" fill="#00ff00"/><rect x="626" y="142" width="1" height="5" fill="#000000"/>
<rect x="630" y="123" width="1" height="22" fill="#00ff00"/><rect x="630" y="161" width="1" height="12" fill="#00ff00"/><rect x="629" y="145" width="3" height="16" fill="#00ff00"/><rect x="630" y="146" width="1" height="14" fill="#ffffff"/>
<rect x="634" y="158" width="1" height="1" fill="#00ff00"/><rect x="634" y="175" width="1" height="6" fill="#00ff00"/><rect x="633" y="159" width="3" height="16" fill="#00ff00"/><rect x="634" y="160" width="1" height="14" fill="#ffffff"/>
<rect x="638" y="165" width="1" height="1" fill="#00ff00"/><rect x="638" y="175" width="1" height="1" fill="#00ff00"/><rect x="637" y="166" width="3" height="9" fill="#00ff00"/><rect x="638" y="167" width="1" height="7" fill="#000000"/>
</g>
<g shape-rendering="crispEdges">
<rect x="3" y="116" width="744" height="2" fill="#FF0000"/>
<rect x="3" y="148" width="744" height="2" fill="#FF0000"/>
<rect x="3" y="166" width="744" height="1" fill="#778899"/>
<rect x="3" y="282" width="744" height="2" fill="#00FFFF"/>
<rect x="3" y="324" width="744" height="2" fill="#00FFFF"/>
</g>
<g shape-rendering="crispEdges">
<polyline points="397.5,192.5 416.5,160.5" fill="none" stroke="#1E90FF" stroke-width="1" stroke-dasharray="2,2"/>
<polyline points="392.5,203.5 419.5,168.5" fill="none" stroke="#FF4500" stroke-width="1" stroke-dasharray="4,2"/>
<polyline points="512.5,247.5 590.5,199.5" fill="none" stroke="#FF4500" stroke-width="1" stroke-dasharray="4,3"/>
<polyline points="538.5,248.5 592.5,196.5" fill="none" stroke="#FF4500" stroke-width="1" stroke-dasharray="4,3"/>
</g>
<polyline points="560.5,200.5 588.5,196.5" fill="none" stroke="#1E90FF" stroke-width="1" stroke-dasharray="3,3"/>
<polygon points="508.5,240.5 512.5,240.5 512.5,243.5 514.5,243.5 510.5,247.5 506.5,243.5 508.5,243.5" fill="#E8502A" stroke="#fff" stroke-width="1.3"/>
<polygon points="532.5,243.5 536.5,243.5 536.5,246.5 538.5,246.5 534.5,250.5 530.5,246.5 532.5,246.5" fill="#E8502A" stroke="#fff" stroke-width="1.3"/>
<polygon points="544.5,208.5 548.5,208.5 548.5,211.5 550.5,211.5 546.5,215.5 542.5,211.5 544.5,211.5" fill="#E8502A" stroke="#fff" stroke-width="1.3"/>
<polygon points="592.5,187.5 596.5,187.5 596.5,190.5 598.5,190.5 594.5,194.5 590.5,190.5 592.5,190.5" fill="#E8502A" stroke="#fff" stroke-width="1.3"/>
<polygon points="558.5,201.5 562.5,205.5 560.5,205.5 560.5,208.5 556.5,208.5 556.5,205.5 554.5,205.5" fill="#2A7AD0" stroke="#fff" stroke-width="1.3"/>
<polygon points="594.5,197.5 598.5,201.5 596.5,201.5 596.5,204.5 592.5,204.5 592.5,201.5 590.5,201.5" fill="#2A7AD0" stroke="#fff" stroke-width="1.3"/>
<rect x="590" y="204" width="9" height="4" fill="#fff"/><rect x="592" y="205" width="5" height="1" fill="#1E90FF"/>
<polygon points="653,161 662.5,161 662.5,176 668,176 657.8,185.5 647.5,176 653,176" fill="none" stroke="#00FFFF" stroke-width="2"/>
<g shape-rendering="crispEdges">
<rect x="3" y="444" width="670" height="3" fill="#000"/>
<rect x="3" y="431" width="3" height="13" fill="#fff"/>
<rect x="4" y="432" width="1" height="11" fill="#B0E4E8"/>
<rect x="5" y="431" width="1" height="16" fill="#000"/>
<rect x="3" y="444" width="1" height="3" fill="#fff"/>
<svg x="4" y="431" width="1" height="13" overflow="hidden"><text x="2" y="11" font-family="Liberation Sans, sans-serif" font-size="10" font-weight="bold" fill="#000" textLength="2" lengthAdjust="spacingAndGlyphs">[</text></svg>
<rect x="7" y="431" width="3" height="13" fill="#fff"/>
<rect x="8" y="432" width="1" height="11" fill="#B0E4E8"/>
<rect x="9" y="431" width="1" height="16" fill="#000"/>
<rect x="7" y="444" width="1" height="3" fill="#fff"/>
<svg x="8" y="431" width="1" height="13" overflow="hidden"><text x="2" y="11" font-family="Liberation Sans, sans-serif" font-size="10" font-weight="bold" fill="#000" textLength="2" lengthAdjust="spacingAndGlyphs">(</text></svg>
<rect x="10" y="431" width="4" height="13" fill="#fff"/>
<rect x="11" y="432" width="2" height="11" fill="#F0F0F0"/>
<rect x="13" y="431" width="1" height="16" fill="#000"/>
<rect x="10" y="444" width="1" height="3" fill="#fff"/>
<rect x="14" y="431" width="16" height="13" fill="#fff"/>
<rect x="15" y="432" width="14" height="11" fill="#F0F0F0"/>
<rect x="29" y="431" width="1" height="16" fill="#000"/>
<rect x="14" y="444" width="1" height="3" fill="#fff"/>
<rect x="18" y="445" width="1" height="2" fill="#fff"/>
<rect x="22" y="445" width="1" height="2" fill="#fff"/>
<rect x="26" y="445" width="1" height="2" fill="#fff"/>
<svg x="15" y="431" width="14" height="13" overflow="hidden"><text x="2" y="11" font-family="Liberation Sans, sans-serif" font-size="10" font-weight="bold" fill="#000" textLength="12" lengthAdjust="spacingAndGlyphs">19:</text></svg>
<rect x="30" y="431" width="16" height="13" fill="#fff"/>
<rect x="31" y="432" width="14" height="11" fill="#B0E4E8"/>
<rect x="45" y="431" width="1" height="16" fill="#000"/>
<rect x="30" y="444" width="1" height="3" fill="#fff"/>
<rect x="34" y="445" width="1" height="2" fill="#fff"/>
<rect x="38" y="445" width="1" height="2" fill="#fff"/>
<rect x="42" y="445" width="1" height="2" fill="#fff"/>
<svg x="31" y="431" width="14" height="13" overflow="hidden"><text x="2" y="11" font-family="Liberation Sans, sans-serif" font-size="10" font-weight="bold" fill="#000" textLength="12" lengthAdjust="spacingAndGlyphs">11:</text></svg>
<rect x="46" y="431" width="24" height="13" fill="#fff"/>
<rect x="47" y="432" width="22" height="11" fill="#FFB6C1"/>
<rect x="69" y="431" width="1" height="16" fill="#000"/>
<rect x="46" y="444" width="1" height="3" fill="#fff"/>
<rect x="50" y="445" width="1" height="2" fill="#fff"/>
<rect x="54" y="445" width="1" height="2" fill="#fff"/>
<rect x="58" y="445" width="1" height="2" fill="#fff"/>
<rect x="62" y="445" width="1" height="2" fill="#fff"/>
<rect x="66" y="445" width="1" height="2" fill="#fff"/>
<svg x="47" y="431" width="22" height="13" overflow="hidden"><text x="2" y="11" font-family="Liberation Sans, sans-serif" font-size="10" font-weight="bold" fill="#000" textLength="22" lengthAdjust="spacingAndGlyphs">02:01</text></svg>
<rect x="70" y="431" width="8" height="13" fill="#fff"/>
<rect x="71" y="432" width="6" height="11" fill="#F0F0F0"/>
<rect x="77" y="431" width="1" height="16" fill="#000"/>
<rect x="70" y="444" width="1" height="3" fill="#fff"/>
<rect x="74" y="445" width="1" height="2" fill="#fff"/>
<svg x="71" y="431" width="6" height="13" overflow="hidden"><text x="2" y="11" font-family="Liberation Sans, sans-serif" font-size="10" font-weight="bold" fill="#000" textLength="4" lengthAdjust="spacingAndGlyphs">0</text></svg>
<rect x="79" y="431" width="3" height="13" fill="#fff"/>
<rect x="80" y="432" width="1" height="11" fill="#B0E4E8"/>
<rect x="81" y="431" width="1" height="16" fill="#000"/>
<rect x="79" y="444" width="1" height="3" fill="#fff"/>
<polygon points="82,431 103,431 109,437 103,443 82,443" fill="#fff"/>
<polygon points="83,432 103,432 108,437 103,442 83,442" fill="#B0E4E8"/>
<rect x="82" y="444" width="1" height="3" fill="#fff"/>
<rect x="86" y="445" width="1" height="2" fill="#fff"/>
<rect x="90" y="445" width="1" height="2" fill="#fff"/>
<rect x="94" y="445" width="1" height="2" fill="#fff"/>
<rect x="98" y="445" width="1" height="2" fill="#fff"/>
<rect x="102" y="445" width="1" height="2" fill="#fff"/>
<rect x="106" y="445" width="1" height="2" fill="#fff"/>
<svg x="83" y="431" width="25" height="13" overflow="hidden"><text x="2" y="11" font-family="Liberation Sans, sans-serif" font-size="10" font-weight="bold" fill="#000" textLength="22" lengthAdjust="spacingAndGlyphs">13:02</text></svg>
<rect x="110" y="431" width="3" height="13" fill="#fff"/>
<rect x="111" y="432" width="1" height="11" fill="#FFB6C1"/>
<rect x="112" y="431" width="1" height="16" fill="#000"/>
<rect x="110" y="444" width="1" height="3" fill="#fff"/>
<rect x="114" y="431" width="12" height="13" fill="#fff"/>
<rect x="115" y="432" width="10" height="11" fill="#B0E4E8"/>
<rect x="125" y="431" width="1" height="16" fill="#000"/>
<rect x="114" y="444" width="1" height="3" fill="#fff"/>
<rect x="118" y="445" width="1" height="2" fill="#fff"/>
<rect x="122" y="445" width="1" height="2" fill="#fff"/>
<svg x="115" y="431" width="10" height="13" overflow="hidden"><text x="2" y="11" font-family="Liberation Sans, sans-serif" font-size="10" font-weight="bold" fill="#000" textLength="9" lengthAdjust="spacingAndGlyphs">20</text></svg>
<rect x="126" y="431" width="7" height="13" fill="#fff"/>
<rect x="127" y="432" width="5" height="11" fill="#B0E4E8"/>
<rect x="132" y="431" width="1" height="16" fill="#000"/>
<rect x="126" y="444" width="1" height="3" fill="#fff"/>
<rect x="130" y="445" width="1" height="2" fill="#fff"/>
<svg x="127" y="431" width="5" height="13" overflow="hidden"><text x="2" y="11" font-family="Liberation Sans, sans-serif" font-size="10" font-weight="bold" fill="#000" textLength="4" lengthAdjust="spacingAndGlyphs">1</text></svg>
<rect x="161" y="431" width="5" height="13" fill="#fff"/>
<rect x="162" y="432" width="3" height="11" fill="#F0F0F0"/>
<rect x="165" y="431" width="1" height="16" fill="#000"/>
<rect x="161" y="444" width="1" height="3" fill="#fff"/>
<svg x="162" y="431" width="3" height="13" overflow="hidden"><text x="2" y="11" font-family="Liberation Sans, sans-serif" font-size="10" font-weight="bold" fill="#000" textLength="2" lengthAdjust="spacingAndGlyphs">)</text></svg>
<polygon points="134,431 155,431 161,437 155,443 134,443" fill="#fff"/>
<polygon points="135,432 155,432 160,437 155,442 135,442" fill="#F0F0F0"/>
<rect x="134" y="444" width="1" height="3" fill="#fff"/>
<rect x="138" y="445" width="1" height="2" fill="#fff"/>
<rect x="142" y="445" width="1" height="2" fill="#fff"/>
<rect x="146" y="445" width="1" height="2" fill="#fff"/>
<rect x="150" y="445" width="1" height="2" fill="#fff"/>
<rect x="154" y="445" width="1" height="2" fill="#fff"/>
<rect x="158" y="445" width="1" height="2" fill="#fff"/>
<svg x="135" y="431" width="25" height="13" overflow="hidden"><text x="2" y="11" font-family="Liberation Sans, sans-serif" font-size="10" font-weight="bold" fill="#000" textLength="22" lengthAdjust="spacingAndGlyphs">17:00</text></svg>
<rect x="167" y="431" width="3" height="13" fill="#fff"/>
<rect x="168" y="432" width="1" height="11" fill="#B0E4E8"/>
<rect x="169" y="431" width="1" height="16" fill="#000"/>
<rect x="167" y="444" width="1" height="3" fill="#fff"/>
<rect x="170" y="431" width="20" height="13" fill="#fff"/>
<rect x="171" y="432" width="18" height="11" fill="#B0E4E8"/>
<rect x="189" y="431" width="1" height="16" fill="#000"/>
<rect x="170" y="444" width="1" height="3" fill="#fff"/>
<rect x="174" y="445" width="1" height="2" fill="#fff"/>
<rect x="178" y="445" width="1" height="2" fill="#fff"/>
<rect x="182" y="445" width="1" height="2" fill="#fff"/>
<rect x="186" y="445" width="1" height="2" fill="#fff"/>
<svg x="171" y="431" width="18" height="13" overflow="hidden"><text x="2" y="11" font-family="Liberation Sans, sans-serif" font-size="10" font-weight="bold" fill="#000" textLength="17" lengthAdjust="spacingAndGlyphs">07:0</text></svg>
<rect x="215" y="431" width="11" height="13" fill="#fff"/>
<rect x="216" y="432" width="9" height="11" fill="#F0F0F0"/>
<rect x="225" y="431" width="1" height="16" fill="#000"/>
<rect x="215" y="444" width="1" height="3" fill="#fff"/>
<rect x="219" y="445" width="1" height="2" fill="#fff"/>
<rect x="223" y="445" width="1" height="2" fill="#fff"/>
<svg x="216" y="431" width="9" height="13" overflow="hidden"><text x="2" y="11" font-family="Liberation Sans, sans-serif" font-size="10" font-weight="bold" fill="#000" textLength="7" lengthAdjust="spacingAndGlyphs">)2</text></svg>
<polygon points="190,431 210,431 216,437 210,443 190,443" fill="#fff"/>
<polygon points="191,432 210,432 215,437 210,442 191,442" fill="#B0E4E8"/>
<rect x="190" y="444" width="1" height="3" fill="#fff"/>
<rect x="194" y="445" width="1" height="2" fill="#fff"/>
<rect x="198" y="445" width="1" height="2" fill="#fff"/>
<rect x="202" y="445" width="1" height="2" fill="#fff"/>
<rect x="206" y="445" width="1" height="2" fill="#fff"/>
<rect x="210" y="445" width="1" height="2" fill="#fff"/>
<rect x="214" y="445" width="1" height="2" fill="#fff"/>
<svg x="191" y="431" width="24" height="13" overflow="hidden"><text x="2" y="11" font-family="Liberation Sans, sans-serif" font-size="10" font-weight="bold" fill="#000" textLength="22" lengthAdjust="spacingAndGlyphs">01:50</text></svg>
<rect x="226" y="431" width="12" height="13" fill="#fff"/>
<rect x="227" y="432" width="10" height="11" fill="#B0E4E8"/>
<rect x="237" y="431" width="1" height="16" fill="#000"/>
<rect x="226" y="444" width="1" height="3" fill="#fff"/>
<rect x="230" y="445" width="1" height="2" fill="#fff"/>
<rect x="234" y="445" width="1" height="2" fill="#fff"/>
<svg x="227" y="431" width="10" height="13" overflow="hidden"><text x="2" y="11" font-family="Liberation Sans, sans-serif" font-size="10" font-weight="bold" fill="#000" textLength="9" lengthAdjust="spacingAndGlyphs">12</text></svg>
<rect x="265" y="431" width="21" height="13" fill="#fff"/>
<rect x="266" y="432" width="19" height="11" fill="#F0F0F0"/>
<rect x="285" y="431" width="1" height="16" fill="#000"/>
<rect x="265" y="444" width="1" height="3" fill="#fff"/>
<rect x="269" y="445" width="1" height="2" fill="#fff"/>
<rect x="273" y="445" width="1" height="2" fill="#fff"/>
<rect x="277" y="445" width="1" height="2" fill="#fff"/>
<rect x="281" y="445" width="1" height="2" fill="#fff"/>
<svg x="266" y="431" width="19" height="13" overflow="hidden"><text x="2" y="11" font-family="Liberation Sans, sans-serif" font-size="10" font-weight="bold" fill="#000" textLength="17" lengthAdjust="spacingAndGlyphs">07:0</text></svg>
<polygon points="238,431 260,431 266,437 260,443 238,443" fill="#fff"/>
<polygon points="239,432 260,432 265,437 260,442 239,442" fill="#FFB6C1"/>
<rect x="238" y="444" width="1" height="3" fill="#fff"/>
<rect x="242" y="445" width="1" height="2" fill="#fff"/>
<rect x="246" y="445" width="1" height="2" fill="#fff"/>
<rect x="250" y="445" width="1" height="2" fill="#fff"/>
<rect x="254" y="445" width="1" height="2" fill="#fff"/>
<rect x="258" y="445" width="1" height="2" fill="#fff"/>
<rect x="262" y="445" width="1" height="2" fill="#fff"/>
<svg x="239" y="431" width="26" height="13" overflow="hidden"><text x="2" y="11" font-family="Liberation Sans, sans-serif" font-size="10" font-weight="bold" fill="#000" textLength="22" lengthAdjust="spacingAndGlyphs">02:01</text></svg>
<rect x="287" y="431" width="3" height="13" fill="#fff"/>
<rect x="288" y="432" width="1" height="11" fill="#F0F0F0"/>
<rect x="289" y="431" width="1" height="16" fill="#000"/>
<rect x="287" y="444" width="1" height="3" fill="#fff"/>
<rect x="285" y="431" width="3" height="13" fill="#fff"/>
<rect x="286" y="432" width="1" height="11" fill="#F0F0F0"/>
<rect x="287" y="431" width="1" height="16" fill="#000"/>
<rect x="285" y="444" width="1" height="3" fill="#fff"/>
<rect x="289" y="431" width="4" height="13" fill="#fff"/>
<rect x="290" y="432" width="2" height="11" fill="#F0F0F0"/>
<rect x="292" y="431" width="1" height="16" fill="#000"/>
<rect x="289" y="444" width="1" height="3" fill="#fff"/>
<rect x="294" y="431" width="24" height="13" fill="#fff"/>
<rect x="295" y="432" width="22" height="11" fill="#B0E4E8"/>
<rect x="317" y="431" width="1" height="16" fill="#000"/>
<rect x="294" y="444" width="1" height="3" fill="#fff"/>
<rect x="298" y="445" width="1" height="2" fill="#fff"/>
<rect x="302" y="445" width="1" height="2" fill="#fff"/>
<rect x="306" y="445" width="1" height="2" fill="#fff"/>
<rect x="310" y="445" width="1" height="2" fill="#fff"/>
<rect x="314" y="445" width="1" height="2" fill="#fff"/>
<svg x="295" y="431" width="22" height="13" overflow="hidden"><text x="2" y="11" font-family="Liberation Sans, sans-serif" font-size="10" font-weight="bold" fill="#000" textLength="22" lengthAdjust="spacingAndGlyphs">11:23</text></svg>
<rect x="318" y="431" width="3" height="13" fill="#fff"/>
<rect x="319" y="432" width="1" height="11" fill="#FFB6C1"/>
<rect x="320" y="431" width="1" height="16" fill="#000"/>
<rect x="318" y="444" width="1" height="3" fill="#fff"/>
<rect x="322" y="431" width="4" height="13" fill="#fff"/>
<rect x="323" y="432" width="2" height="11" fill="#B0E4E8"/>
<rect x="325" y="431" width="1" height="16" fill="#000"/>
<rect x="322" y="444" width="1" height="3" fill="#fff"/>
<rect x="326" y="431" width="20" height="13" fill="#fff"/>
<rect x="327" y="432" width="18" height="11" fill="#FFB6C1"/>
<rect x="345" y="431" width="1" height="16" fill="#000"/>
<rect x="326" y="444" width="1" height="3" fill="#fff"/>
<rect x="330" y="445" width="1" height="2" fill="#fff"/>
<rect x="334" y="445" width="1" height="2" fill="#fff"/>
<rect x="338" y="445" width="1" height="2" fill="#fff"/>
<rect x="342" y="445" width="1" height="2" fill="#fff"/>
<svg x="327" y="431" width="18" height="13" overflow="hidden"><text x="2" y="11" font-family="Liberation Sans, sans-serif" font-size="10" font-weight="bold" fill="#000" textLength="17" lengthAdjust="spacingAndGlyphs">17:1</text></svg>
<rect x="346" y="431" width="12" height="13" fill="#fff"/>
<rect x="347" y="432" width="10" height="11" fill="#B0E4E8"/>
<rect x="357" y="431" width="1" height="16" fill="#000"/>
<rect x="346" y="444" width="1" height="3" fill="#fff"/>
<rect x="350" y="445" width="1" height="2" fill="#fff"/>
<rect x="354" y="445" width="1" height="2" fill="#fff"/>
<svg x="347" y="431" width="10" height="13" overflow="hidden"><text x="2" y="11" font-family="Liberation Sans, sans-serif" font-size="10" font-weight="bold" fill="#000" textLength="9" lengthAdjust="spacingAndGlyphs">12</text></svg>
<rect x="386" y="431" width="4" height="13" fill="#fff"/>
<rect x="387" y="432" width="2" height="11" fill="#FFB6C1"/>
<rect x="389" y="431" width="1" height="16" fill="#000"/>
<rect x="386" y="444" width="1" height="3" fill="#fff"/>
<svg x="387" y="431" width="2" height="13" overflow="hidden"><text x="2" y="11" font-family="Liberation Sans, sans-serif" font-size="10" font-weight="bold" fill="#000" textLength="2" lengthAdjust="spacingAndGlyphs">)</text></svg>
<polygon points="358,431 380,431 386,437 380,443 358,443" fill="#fff"/>
<polygon points="359,432 380,432 385,437 380,442 359,442" fill="#B0E4E8"/>
<rect x="358" y="444" width="1" height="3" fill="#fff"/>
<rect x="362" y="445" width="1" height="2" fill="#fff"/>
<rect x="366" y="445" width="1" height="2" fill="#fff"/>
<rect x="370" y="445" width="1" height="2" fill="#fff"/>
<rect x="374" y="445" width="1" height="2" fill="#fff"/>
<rect x="378" y="445" width="1" height="2" fill="#fff"/>
<rect x="382" y="445" width="1" height="2" fill="#fff"/>
<svg x="359" y="431" width="26" height="13" overflow="hidden"><text x="2" y="11" font-family="Liberation Sans, sans-serif" font-size="10" font-weight="bold" fill="#000" textLength="22" lengthAdjust="spacingAndGlyphs">02:01</text></svg>
<rect x="390" y="431" width="16" height="13" fill="#fff"/>
<rect x="391" y="432" width="14" height="11" fill="#FFB6C1"/>
<rect x="405" y="431" width="1" height="16" fill="#000"/>
<rect x="390" y="444" width="1" height="3" fill="#fff"/>
<rect x="394" y="445" width="1" height="2" fill="#fff"/>
<rect x="398" y="445" width="1" height="2" fill="#fff"/>
<rect x="402" y="445" width="1" height="2" fill="#fff"/>
<svg x="391" y="431" width="14" height="13" overflow="hidden"><text x="2" y="11" font-family="Liberation Sans, sans-serif" font-size="10" font-weight="bold" fill="#000" textLength="12" lengthAdjust="spacingAndGlyphs">10:</text></svg>
<rect x="407" y="431" width="3" height="13" fill="#fff"/>
<rect x="408" y="432" width="1" height="11" fill="#F0F0F0"/>
<rect x="409" y="431" width="1" height="16" fill="#000"/>
<rect x="407" y="444" width="1" height="3" fill="#fff"/>
<rect x="411" y="431" width="3" height="13" fill="#fff"/>
<rect x="412" y="432" width="1" height="11" fill="#B0E4E8"/>
<rect x="413" y="431" width="1" height="16" fill="#000"/>
<rect x="411" y="444" width="1" height="3" fill="#fff"/>
<rect x="414" y="431" width="4" height="13" fill="#fff"/>
<rect x="415" y="432" width="2" height="11" fill="#FFB6C1"/>
<rect x="417" y="431" width="1" height="16" fill="#000"/>
<rect x="414" y="444" width="1" height="3" fill="#fff"/>
<rect x="418" y="431" width="12" height="13" fill="#fff"/>
<rect x="419" y="432" width="10" height="11" fill="#B0E4E8"/>
<rect x="429" y="431" width="1" height="16" fill="#000"/>
<rect x="418" y="444" width="1" height="3" fill="#fff"/>
<rect x="422" y="445" width="1" height="2" fill="#fff"/>
<rect x="426" y="445" width="1" height="2" fill="#fff"/>
<svg x="419" y="431" width="10" height="13" overflow="hidden"><text x="2" y="11" font-family="Liberation Sans, sans-serif" font-size="10" font-weight="bold" fill="#000" textLength="9" lengthAdjust="spacingAndGlyphs">15</text></svg>
<rect x="430" y="431" width="12" height="13" fill="#fff"/>
<rect x="431" y="432" width="10" height="11" fill="#F0F0F0"/>
<rect x="441" y="431" width="1" height="16" fill="#000"/>
<rect x="430" y="444" width="1" height="3" fill="#fff"/>
<rect x="434" y="445" width="1" height="2" fill="#fff"/>
<rect x="438" y="445" width="1" height="2" fill="#fff"/>
<svg x="431" y="431" width="10" height="13" overflow="hidden"><text x="2" y="11" font-family="Liberation Sans, sans-serif" font-size="10" font-weight="bold" fill="#000" textLength="9" lengthAdjust="spacingAndGlyphs">02</text></svg>
<rect x="442" y="431" width="7" height="13" fill="#fff"/>
<rect x="443" y="432" width="5" height="11" fill="#B0E4E8"/>
<rect x="448" y="431" width="1" height="16" fill="#000"/>
<rect x="442" y="444" width="1" height="3" fill="#fff"/>
<rect x="446" y="445" width="1" height="2" fill="#fff"/>
<svg x="443" y="431" width="5" height="13" overflow="hidden"><text x="2" y="11" font-family="Liberation Sans, sans-serif" font-size="10" font-weight="bold" fill="#000" textLength="4" lengthAdjust="spacingAndGlyphs">1</text></svg>
<rect x="450" y="431" width="19" height="13" fill="#fff"/>
<rect x="451" y="432" width="17" height="11" fill="#B0E4E8"/>
<rect x="468" y="431" width="1" height="16" fill="#000"/>
<rect x="450" y="444" width="1" height="3" fill="#fff"/>
<rect x="454" y="445" width="1" height="2" fill="#fff"/>
<rect x="458" y="445" width="1" height="2" fill="#fff"/>
<rect x="462" y="445" width="1" height="2" fill="#fff"/>
<rect x="466" y="445" width="1" height="2" fill="#fff"/>
<svg x="451" y="431" width="17" height="13" overflow="hidden"><text x="2" y="11" font-family="Liberation Sans, sans-serif" font-size="10" font-weight="bold" fill="#000" textLength="17" lengthAdjust="spacingAndGlyphs">20:5</text></svg>
<rect x="470" y="431" width="3" height="13" fill="#fff"/>
<rect x="471" y="432" width="1" height="11" fill="#F0F0F0"/>
<rect x="472" y="431" width="1" height="16" fill="#000"/>
<rect x="470" y="444" width="1" height="3" fill="#fff"/>
<rect x="474" y="431" width="16" height="13" fill="#fff"/>
<rect x="475" y="432" width="14" height="11" fill="#B0E4E8"/>
<rect x="489" y="431" width="1" height="16" fill="#000"/>
<rect x="474" y="444" width="1" height="3" fill="#fff"/>
<rect x="478" y="445" width="1" height="2" fill="#fff"/>
<rect x="482" y="445" width="1" height="2" fill="#fff"/>
<rect x="486" y="445" width="1" height="2" fill="#fff"/>
<svg x="475" y="431" width="14" height="13" overflow="hidden"><text x="2" y="11" font-family="Liberation Sans, sans-serif" font-size="10" font-weight="bold" fill="#000" textLength="12" lengthAdjust="spacingAndGlyphs">20:</text></svg>
<rect x="516" y="431" width="10" height="13" fill="#fff"/>
<rect x="517" y="432" width="8" height="11" fill="#B0E4E8"/>
<rect x="525" y="431" width="1" height="16" fill="#000"/>
<rect x="516" y="444" width="1" height="3" fill="#fff"/>
<rect x="520" y="445" width="1" height="2" fill="#fff"/>
<rect x="524" y="445" width="1" height="2" fill="#fff"/>
<svg x="517" y="431" width="8" height="13" overflow="hidden"><text x="2" y="11" font-family="Liberation Sans, sans-serif" font-size="10" font-weight="bold" fill="#000" textLength="7" lengthAdjust="spacingAndGlyphs">1:</text></svg>
<polygon points="491,431 511,431 517,437 511,443 491,443" fill="#fff"/>
<polygon points="492,432 511,432 516,437 511,442 492,442" fill="#B0E4E8"/>
<rect x="491" y="444" width="1" height="3" fill="#fff"/>
<rect x="495" y="445" width="1" height="2" fill="#fff"/>
<rect x="499" y="445" width="1" height="2" fill="#fff"/>
<rect x="503" y="445" width="1" height="2" fill="#fff"/>
<rect x="507" y="445" width="1" height="2" fill="#fff"/>
<rect x="511" y="445" width="1" height="2" fill="#fff"/>
<rect x="515" y="445" width="1" height="2" fill="#fff"/>
<svg x="492" y="431" width="24" height="13" overflow="hidden"><text x="2" y="11" font-family="Liberation Sans, sans-serif" font-size="10" font-weight="bold" fill="#000" textLength="22" lengthAdjust="spacingAndGlyphs">13:00</text></svg>
<rect x="527" y="431" width="11" height="13" fill="#fff"/>
<rect x="528" y="432" width="9" height="11" fill="#FFB6C1"/>
<rect x="537" y="431" width="1" height="16" fill="#000"/>
<rect x="527" y="444" width="1" height="3" fill="#fff"/>
<rect x="531" y="445" width="1" height="2" fill="#fff"/>
<rect x="535" y="445" width="1" height="2" fill="#fff"/>
<svg x="528" y="431" width="9" height="13" overflow="hidden"><text x="2" y="11" font-family="Liberation Sans, sans-serif" font-size="10" font-weight="bold" fill="#000" textLength="9" lengthAdjust="spacingAndGlyphs">02</text></svg>
<rect x="565" y="431" width="5" height="13" fill="#fff"/>
<rect x="566" y="432" width="3" height="11" fill="#B0E4E8"/>
<rect x="569" y="431" width="1" height="16" fill="#000"/>
<rect x="565" y="444" width="1" height="3" fill="#fff"/>
<svg x="566" y="431" width="3" height="13" overflow="hidden"><text x="2" y="11" font-family="Liberation Sans, sans-serif" font-size="10" font-weight="bold" fill="#000" textLength="2" lengthAdjust="spacingAndGlyphs">)</text></svg>
<polygon points="538,431 560,431 566,437 560,443 538,443" fill="#fff"/>
<polygon points="539,432 560,432 565,437 560,442 539,442" fill="#F0F0F0"/>
<rect x="538" y="444" width="1" height="3" fill="#fff"/>
<rect x="542" y="445" width="1" height="2" fill="#fff"/>
<rect x="546" y="445" width="1" height="2" fill="#fff"/>
<rect x="550" y="445" width="1" height="2" fill="#fff"/>
<rect x="554" y="445" width="1" height="2" fill="#fff"/>
<rect x="558" y="445" width="1" height="2" fill="#fff"/>
<rect x="562" y="445" width="1" height="2" fill="#fff"/>
<svg x="539" y="431" width="26" height="13" overflow="hidden"><text x="2" y="11" font-family="Liberation Sans, sans-serif" font-size="10" font-weight="bold" fill="#000" textLength="22" lengthAdjust="spacingAndGlyphs">13:00</text></svg>
<rect x="571" y="431" width="3" height="13" fill="#fff"/>
<rect x="572" y="432" width="1" height="11" fill="#B0E4E8"/>
<rect x="573" y="431" width="1" height="16" fill="#000"/>
<rect x="571" y="444" width="1" height="3" fill="#fff"/>
<rect x="575" y="431" width="7" height="13" fill="#fff"/>
<rect x="576" y="432" width="5" height="11" fill="#F0F0F0"/>
<rect x="581" y="431" width="1" height="16" fill="#000"/>
<rect x="575" y="444" width="1" height="3" fill="#fff"/>
<rect x="579" y="445" width="1" height="2" fill="#fff"/>
<svg x="576" y="431" width="5" height="13" overflow="hidden"><text x="2" y="11" font-family="Liberation Sans, sans-serif" font-size="10" font-weight="bold" fill="#000" textLength="4" lengthAdjust="spacingAndGlyphs">0</text></svg>
<rect x="583" y="431" width="3" height="13" fill="#fff"/>
<rect x="584" y="432" width="1" height="11" fill="#B0E4E8"/>
<rect x="585" y="431" width="1" height="16" fill="#000"/>
<rect x="583" y="444" width="1" height="3" fill="#fff"/>
<rect x="587" y="431" width="15" height="13" fill="#fff"/>
<rect x="588" y="432" width="13" height="11" fill="#F0F0F0"/>
<rect x="601" y="431" width="1" height="16" fill="#000"/>
<rect x="587" y="444" width="1" height="3" fill="#fff"/>
<rect x="591" y="445" width="1" height="2" fill="#fff"/>
<rect x="595" y="445" width="1" height="2" fill="#fff"/>
<rect x="599" y="445" width="1" height="2" fill="#fff"/>
<svg x="588" y="431" width="13" height="13" overflow="hidden"><text x="2" y="11" font-family="Liberation Sans, sans-serif" font-size="10" font-weight="bold" fill="#000" textLength="12" lengthAdjust="spacingAndGlyphs">13:</text></svg>
<polygon points="661,431 667,431 673,437 667,443 661,443" fill="#fff"/>
<polygon points="662,432 667,432 672,437 667,442 662,442" fill="#F0F0F0"/>
<rect x="661" y="444" width="1" height="3" fill="#fff"/>
<rect x="665" y="445" width="1" height="2" fill="#fff"/>
<rect x="669" y="445" width="1" height="2" fill="#fff"/>
<svg x="662" y="431" width="10" height="13" overflow="hidden"><text x="2" y="11" font-family="Liberation Sans, sans-serif" font-size="10" font-weight="bold" fill="#000" textLength="7" lengthAdjust="spacingAndGlyphs">)0</text></svg>
<polygon points="639,431 656,431 662,437 656,443 639,443" fill="#fff"/>
<polygon points="640,432 656,432 661,437 656,442 640,442" fill="#B0E4E8"/>
<rect x="639" y="444" width="1" height="3" fill="#fff"/>
<rect x="643" y="445" width="1" height="2" fill="#fff"/>
<rect x="647" y="445" width="1" height="2" fill="#fff"/>
<rect x="651" y="445" width="1" height="2" fill="#fff"/>
<rect x="655" y="445" width="1" height="2" fill="#fff"/>
<rect x="659" y="445" width="1" height="2" fill="#fff"/>
<svg x="640" y="431" width="21" height="13" overflow="hidden"><text x="2" y="11" font-family="Liberation Sans, sans-serif" font-size="10" font-weight="bold" fill="#000" textLength="17" lengthAdjust="spacingAndGlyphs">5:30</text></svg>
<polygon points="628,431 634,431 640,437 634,443 628,443" fill="#fff"/>
<polygon points="629,432 634,432 639,437 634,442 629,442" fill="#B0E4E8"/>
<rect x="628" y="444" width="1" height="3" fill="#fff"/>
<rect x="632" y="445" width="1" height="2" fill="#fff"/>
<rect x="636" y="445" width="1" height="2" fill="#fff"/>
<svg x="629" y="431" width="10" height="13" overflow="hidden"><text x="2" y="11" font-family="Liberation Sans, sans-serif" font-size="10" font-weight="bold" fill="#000" textLength="12" lengthAdjust="spacingAndGlyphs">)30</text></svg>
<polygon points="602,431 623,431 629,437 623,443 602,443" fill="#fff"/>
<polygon points="603,432 623,432 628,437 623,442 603,442" fill="#B0E4E8"/>
<rect x="602" y="444" width="1" height="3" fill="#fff"/>
<rect x="606" y="445" width="1" height="2" fill="#fff"/>
<rect x="610" y="445" width="1" height="2" fill="#fff"/>
<rect x="614" y="445" width="1" height="2" fill="#fff"/>
<rect x="618" y="445" width="1" height="2" fill="#fff"/>
<rect x="622" y="445" width="1" height="2" fill="#fff"/>
<rect x="626" y="445" width="1" height="2" fill="#fff"/>
<svg x="603" y="431" width="25" height="13" overflow="hidden"><text x="2" y="11" font-family="Liberation Sans, sans-serif" font-size="10" font-weight="bold" fill="#000" textLength="22" lengthAdjust="spacingAndGlyphs">07:30</text></svg>
</g>
</g><g clip-path="url(#cd)">
<g shape-rendering="crispEdges">
<rect x="6" y="524" width="1" height="20" fill="#C0C0C0"/>
<rect x="10" y="524" width="1" height="20" fill="#C0C0C0"/>
<rect x="14" y="524" width="1" height="15" fill="#C0C0C0"/>
<rect x="18" y="524" width="1" height="10" fill="#C0C0C0"/>
<rect x="22" y="524" width="1" height="3" fill="#C0C0C0"/>
<rect x="26" y="523" width="1" height="2" fill="#C0C0C0"/>
<rect x="30" y="518" width="1" height="7" fill="#C0C0C0"/>
<rect x="34" y="509" width="1" height="16" fill="#C0C0C0"/>
<rect x="38" y="498" width="1" height="27" fill="#C0C0C0"/>
<rect x="42" y="489" width="1" height="36" fill="#C0C0C0"/>
<rect x="46" y="483" width="1" height="42" fill="#C0C0C0"/>
<rect x="50" y="482" width="1" height="43" fill="#C0C0C0"/>
<rect x="54" y="476" width="1" height="49" fill="#C0C0C0"/>
<rect x="58" y="472" width="1" height="53" fill="#C0C0C0"/>
<rect x="62" y="466" width="1" height="59" fill="#C0C0C0"/>
<rect x="66" y="464" width="1" height="61" fill="#C0C0C0"/>
<rect x="70" y="464" width="1" height="61" fill="#C0C0C0"/>
<rect x="74" y="464" width="1" height="61" fill="#C0C0C0"/>
<rect x="78" y="464" width="1" height="61" fill="#C0C0C0"/>
<rect x="82" y="470" width="1" height="55" fill="#C0C0C0"/>
<rect x="86" y="479" width="1" height="46" fill="#C0C0C0"/>
<rect x="90" y="488" width="1" height="37" fill="#C0C0C0"/>
<rect x="94" y="496" width="1" height="29" fill="#C0C0C0"/>
<rect x="98" y="500" width="1" height="25" fill="#C0C0C0"/>
<rect x="102" y="504" width="1" height="21" fill="#C0C0C0"/>
<rect x="106" y="503" width="1" height="22" fill="#C0C0C0"/>
<rect x="110" y="505" width="1" height="20" fill="#C0C0C0"/>
<rect x="114" y="509" width="1" height="16" fill="#C0C0C0"/>
<rect x="118" y="510" width="1" height="15" fill="#C0C0C0"/>
<rect x="122" y="510" width="1" height="15" fill="#C0C0C0"/>
<rect x="126" y="509" width="1" height="16" fill="#C0C0C0"/>
<rect x="130" y="510" width="1" height="15" fill="#C0C0C0"/>
<rect x="134" y="509" width="1" height="16" fill="#C0C0C0"/>
<rect x="138" y="510" width="1" height="15" fill="#C0C0C0"/>
<rect x="142" y="510" width="1" height="15" fill="#C0C0C0"/>
<rect x="146" y="513" width="1" height="12" fill="#C0C0C0"/>
<rect x="150" y="521" width="1" height="4" fill="#C0C0C0"/>
<rect x="154" y="524" width="1" height="7" fill="#C0C0C0"/>
<rect x="158" y="524" width="1" height="11" fill="#C0C0C0"/>
<rect x="162" y="524" width="1" height="15" fill="#C0C0C0"/>
<rect x="166" y="524" width="1" height="20" fill="#C0C0C0"/>
<rect x="170" y="524" width="1" height="21" fill="#C0C0C0"/>
<rect x="174" y="524" width="1" height="19" fill="#C0C0C0"/>
<rect x="178" y="524" width="1" height="18" fill="#C0C0C0"/>
<rect x="182" y="524" width="1" height="19" fill="#C0C0C0"/>
<rect x="186" y="524" width="1" height="24" fill="#C0C0C0"/>
<rect x="190" y="524" width="1" height="26" fill="#C0C0C0"/>
<rect x="194" y="524" width="1" height="27" fill="#C0C0C0"/>
<rect x="198" y="524" width="1" height="30" fill="#C0C0C0"/>
<rect x="202" y="524" width="1" height="31" fill="#C0C0C0"/>
<rect x="206" y="524" width="1" height="36" fill="#C0C0C0"/>
<rect x="210" y="524" width="1" height="41" fill="#C0C0C0"/>
<rect x="214" y="524" width="1" height="43" fill="#C0C0C0"/>
<rect x="218" y="524" width="1" height="44" fill="#C0C0C0"/>
<rect x="222" y="524" width="1" height="46" fill="#C0C0C0"/>
<rect x="226" y="524" width="1" height="46" fill="#C0C0C0"/>
<rect x="230" y="524" width="1" height="37" fill="#C0C0C0"/>
<rect x="234" y="524" width="1" height="27" fill="#C0C0C0"/>
<rect x="238" y="524" width="1" height="18" fill="#C0C0C0"/>
<rect x="242" y="524" width="1" height="9" fill="#C0C0C0"/>
<rect x="246" y="524" width="1" height="4" fill="#C0C0C0"/>
<rect x="250" y="524" width="1" height="2" fill="#C0C0C0"/>
<rect x="254" y="518" width="1" height="7" fill="#C0C0C0"/>
<rect x="258" y="512" width="1" height="13" fill="#C0C0C0"/>
<rect x="262" y="509" width="1" height="16" fill="#C0C0C0"/>
<rect x="266" y="506" width="1" height="19" fill="#C0C0C0"/>
<rect x="270" y="506" width="1" height="19" fill="#C0C0C0"/>
<rect x="274" y="509" width="1" height="16" fill="#C0C0C0"/>
<rect x="278" y="518" width="1" height="7" fill="#C0C0C0"/>
<rect x="282" y="524" width="1" height="3" fill="#C0C0C0"/>
<rect x="286" y="524" width="1" height="2" fill="#C0C0C0"/>
<rect x="290" y="523" width="1" height="2" fill="#C0C0C0"/>
<rect x="294" y="521" width="1" height="4" fill="#C0C0C0"/>
<rect x="298" y="524" width="1" height="3" fill="#C0C0C0"/>
<rect x="302" y="524" width="1" height="3" fill="#C0C0C0"/>
<rect x="306" y="524" width="1" height="2" fill="#C0C0C0"/>
<rect x="310" y="523" width="1" height="2" fill="#C0C0C0"/>
<rect x="314" y="520" width="1" height="5" fill="#C0C0C0"/>
<rect x="318" y="512" width="1" height="13" fill="#C0C0C0"/>
<rect x="322" y="510" width="1" height="15" fill="#C0C0C0"/>
<rect x="326" y="514" width="1" height="11" fill="#C0C0C0"/>
<rect x="330" y="518" width="1" height="7" fill="#C0C0C0"/>
<rect x="338" y="524" width="1" height="6" fill="#C0C0C0"/>
<rect x="342" y="524" width="1" height="8" fill="#C0C0C0"/>
<rect x="346" y="524" width="1" height="6" fill="#C0C0C0"/>
<rect x="350" y="524" width="1" height="5" fill="#C0C0C0"/>
<rect x="354" y="524" width="1" height="9" fill="#C0C0C0"/>
<rect x="358" y="524" width="1" height="5" fill="#C0C0C0"/>
<rect x="362" y="524" width="1" height="7" fill="#C0C0C0"/>
<rect x="366" y="524" width="1" height="6" fill="#C0C0C0"/>
<rect x="370" y="524" width="1" height="4" fill="#C0C0C0"/>
<rect x="374" y="524" width="1" height="2" fill="#C0C0C0"/>
<rect x="378" y="520" width="1" height="5" fill="#C0C0C0"/>
<rect x="382" y="517" width="1" height="8" fill="#C0C0C0"/>
<rect x="386" y="519" width="1" height="6" fill="#C0C0C0"/>
<rect x="390" y="517" width="1" height="8" fill="#C0C0C0"/>
<rect x="394" y="514" width="1" height="11" fill="#C0C0C0"/>
<rect x="398" y="510" width="1" height="15" fill="#C0C0C0"/>
<rect x="402" y="507" width="1" height="18" fill="#C0C0C0"/>
<rect x="406" y="500" width="1" height="25" fill="#C0C0C0"/>
<rect x="410" y="494" width="1" height="31" fill="#C0C0C0"/>
<rect x="414" y="494" width="1" height="31" fill="#C0C0C0"/>
<rect x="418" y="494" width="1" height="31" fill="#C0C0C0"/>
<rect x="422" y="501" width="1" height="24" fill="#C0C0C0"/>
<rect x="426" y="508" width="1" height="17" fill="#C0C0C0"/>
<rect x="430" y="513" width="1" height="12" fill="#C0C0C0"/>
<rect x="434" y="515" width="1" height="10" fill="#C0C0C0"/>
<rect x="438" y="516" width="1" height="9" fill="#C0C0C0"/>
<rect x="442" y="518" width="1" height="7" fill="#C0C0C0"/>
<rect x="446" y="524" width="1" height="5" fill="#C0C0C0"/>
<rect x="450" y="524" width="1" height="15" fill="#C0C0C0"/>
<rect x="454" y="524" width="1" height="13" fill="#C0C0C0"/>
<rect x="458" y="524" width="1" height="19" fill="#C0C0C0"/>
<rect x="462" y="524" width="1" height="20" fill="#C0C0C0"/>
<rect x="466" y="524" width="1" height="18" fill="#C0C0C0"/>
<rect x="470" y="524" width="1" height="13" fill="#C0C0C0"/>
<rect x="474" y="524" width="1" height="9" fill="#C0C0C0"/>
<rect x="478" y="524" width="1" height="9" fill="#C0C0C0"/>
<rect x="482" y="524" width="1" height="7" fill="#C0C0C0"/>
<rect x="486" y="524" width="1" height="3" fill="#C0C0C0"/>
<rect x="490" y="524" width="1" height="6" fill="#C0C0C0"/>
<rect x="494" y="524" width="1" height="6" fill="#C0C0C0"/>
<rect x="498" y="524" width="1" height="5" fill="#C0C0C0"/>
<rect x="502" y="524" width="1" height="3" fill="#C0C0C0"/>
<rect x="506" y="524" width="1" height="5" fill="#C0C0C0"/>
<rect x="510" y="524" width="1" height="14" fill="#C0C0C0"/>
<rect x="514" y="524" width="1" height="24" fill="#C0C0C0"/>
<rect x="518" y="524" width="1" height="28" fill="#C0C0C0"/>
<rect x="522" y="524" width="1" height="31" fill="#C0C0C0"/>
<rect x="526" y="524" width="1" height="31" fill="#C0C0C0"/>
<rect x="530" y="524" width="1" height="32" fill="#C0C0C0"/>
<rect x="534" y="524" width="1" height="28" fill="#C0C0C0"/>
<rect x="538" y="524" width="1" height="23" fill="#C0C0C0"/>
<rect x="542" y="524" width="1" height="18" fill="#C0C0C0"/>
<rect x="546" y="524" width="1" height="15" fill="#C0C0C0"/>
<rect x="550" y="524" width="1" height="10" fill="#C0C0C0"/>
<rect x="554" y="524" width="1" height="8" fill="#C0C0C0"/>
<rect x="558" y="524" width="1" height="2" fill="#C0C0C0"/>
<rect x="562" y="519" width="1" height="6" fill="#C0C0C0"/>
<rect x="566" y="518" width="1" height="7" fill="#C0C0C0"/>
<rect x="570" y="517" width="1" height="8" fill="#C0C0C0"/>
<rect x="574" y="514" width="1" height="11" fill="#C0C0C0"/>
<rect x="578" y="510" width="1" height="15" fill="#C0C0C0"/>
<rect x="582" y="507" width="1" height="18" fill="#C0C0C0"/>
<rect x="586" y="504" width="1" height="21" fill="#C0C0C0"/>
<rect x="590" y="498" width="1" height="27" fill="#C0C0C0"/>
<rect x="594" y="500" width="1" height="25" fill="#C0C0C0"/>
<rect x="598" y="502" width="1" height="23" fill="#C0C0C0"/>
<rect x="602" y="502" width="1" height="23" fill="#C0C0C0"/>
<rect x="606" y="490" width="1" height="35" fill="#C0C0C0"/>
<rect x="610" y="482" width="1" height="43" fill="#C0C0C0"/>
<rect x="614" y="480" width="1" height="45" fill="#C0C0C0"/>
<rect x="618" y="479" width="1" height="46" fill="#C0C0C0"/>
<rect x="622" y="477" width="1" height="48" fill="#C0C0C0"/>
<rect x="626" y="477" width="1" height="48" fill="#C0C0C0"/>
<rect x="630" y="481" width="1" height="44" fill="#C0C0C0"/>
<rect x="634" y="485" width="1" height="40" fill="#C0C0C0"/>
<rect x="638" y="490" width="1" height="35" fill="#C0C0C0"/>
<polyline points="2.5,564.5 18.5,549.5 34.5,528.5 42.5,515.5 50.5,505.5 58.5,492.5 66.5,481.5 74.5,473.5 80.5,469.5 90.5,470.5 98.5,475.5 106.5,483.5 114.5,492.5 122.5,502.5 130.5,507.5 138.5,509.5 146.5,510.5 154.5,513.5 160.5,515.5 166.5,521.5 175.5,531.5 185.5,537.5 195.5,544.5 205.5,549.5 215.5,554.5 225.5,560.5 235.5,561.5 240.5,559.5 248.5,551.5 255.5,541.5 262.5,530.5 270.5,520.5 278.5,515.5 290.5,515.1 300.5,518.5 308.5,523.5 316.5,524.5 320.5,522.5 330.5,519.5 345.5,520.5 355.5,523.5 365.5,528.5 375.5,528.5 385.5,524.5 395.5,520.5 405.5,515.5 415.5,509.5 425.5,503.1 435.5,503.5 445.5,507.5 455.5,519.5 465.5,529.5 475.5,534.5 480.5,537.5 490.5,534.5 500.5,529.9 510.5,529.5 520.5,535.5 530.5,543.5 540.5,547.5 550.5,546.5 560.5,537.5 570.5,529.5 578.5,525.5 590.5,513.5 600.5,508.5 610.5,501.5 620.5,494.5 630.5,488.5 638.5,485.1" fill="none" stroke="#FF0000" stroke-width="1" stroke-dasharray="3,3"/>
</g></g>
<g shape-rendering="crispEdges">
<rect x="2.5" y="2.5" width="745" height="445" fill="none" stroke="#fff" stroke-width="1"/>
<rect x="2.5" y="449.5" width="745" height="130" fill="none" stroke="#fff" stroke-width="1"/>
<line x1="748" y1="31.5" x2="752" y2="31.5" stroke="#fff" stroke-width="1"/>
<line x1="748" y1="63.5" x2="752" y2="63.5" stroke="#fff" stroke-width="1"/>
<line x1="748" y1="95.5" x2="752" y2="95.5" stroke="#fff" stroke-width="1"/>
<line x1="748" y1="127.5" x2="752" y2="127.5" stroke="#fff" stroke-width="1"/>
<line x1="748" y1="159.5" x2="752" y2="159.5" stroke="#fff" stroke-width="1"/>
<line x1="748" y1="191.5" x2="752" y2="191.5" stroke="#fff" stroke-width="1"/>
<line x1="748" y1="223.5" x2="752" y2="223.5" stroke="#fff" stroke-width="1"/>
<line x1="748" y1="255.5" x2="752" y2="255.5" stroke="#fff" stroke-width="1"/>
<line x1="748" y1="287.5" x2="752" y2="287.5" stroke="#fff" stroke-width="1"/>
<line x1="748" y1="319.5" x2="752" y2="319.5" stroke="#fff" stroke-width="1"/>
<line x1="748" y1="351.5" x2="752" y2="351.5" stroke="#fff" stroke-width="1"/>
<line x1="748" y1="383.5" x2="752" y2="383.5" stroke="#fff" stroke-width="1"/>
<line x1="748" y1="415.5" x2="752" y2="415.5" stroke="#fff" stroke-width="1"/>
<line x1="748" y1="449.5" x2="752" y2="449.5" stroke="#fff" stroke-width="1"/>
<line x1="748" y1="524.5" x2="752" y2="524.5" stroke="#fff" stroke-width="1"/>
<line x1="748" y1="579.5" x2="752" y2="579.5" stroke="#fff" stroke-width="1"/>
<line x1="2.5" y1="580" x2="2.5" y2="584" stroke="#fff" stroke-width="1"/>
<line x1="66.5" y1="580" x2="66.5" y2="584" stroke="#fff" stroke-width="1"/>
<line x1="130.5" y1="580" x2="130.5" y2="584" stroke="#fff" stroke-width="1"/>
<line x1="194.5" y1="580" x2="194.5" y2="584" stroke="#fff" stroke-width="1"/>
<line x1="258.5" y1="580" x2="258.5" y2="584" stroke="#fff" stroke-width="1"/>
<line x1="322.5" y1="580" x2="322.5" y2="584" stroke="#fff" stroke-width="1"/>
<line x1="386.5" y1="580" x2="386.5" y2="584" stroke="#fff" stroke-width="1"/>
<line x1="450.5" y1="580" x2="450.5" y2="584" stroke="#fff" stroke-width="1"/>
<line x1="514.5" y1="580" x2="514.5" y2="584" stroke="#fff" stroke-width="1"/>
<line x1="578.5" y1="580" x2="578.5" y2="584" stroke="#fff" stroke-width="1"/>
</g>
<g font-family='"Liberation Sans", sans-serif'>
<text x="753.5" y="36" fill="#fff" font-size="11" font-weight="normal" textLength="32" lengthAdjust="spacingAndGlyphs">1.15920</text>
<text x="753.5" y="68" fill="#fff" font-size="11" font-weight="normal" textLength="32" lengthAdjust="spacingAndGlyphs">1.15510</text>
<text x="753.5" y="100" fill="#fff" font-size="11" font-weight="normal" textLength="32" lengthAdjust="spacingAndGlyphs">1.15100</text>
<text x="753.5" y="132" fill="#fff" font-size="11" font-weight="normal" textLength="32" lengthAdjust="spacingAndGlyphs">1.14690</text>
<text x="753.5" y="164" fill="#fff" font-size="11" font-weight="normal" textLength="32" lengthAdjust="spacingAndGlyphs">1.14280</text>
<text x="753.5" y="196" fill="#fff" font-size="11" font-weight="normal" textLength="32" lengthAdjust="spacingAndGlyphs">1.13870</text>
<text x="753.5" y="228" fill="#fff" font-size="11" font-weight="normal" textLength="32" lengthAdjust="spacingAndGlyphs">1.13460</text>
<text x="753.5" y="260" fill="#fff" font-size="11" font-weight="normal" textLength="32" lengthAdjust="spacingAndGlyphs">1.13050</text>
<text x="753.5" y="292" fill="#fff" font-size="11" font-weight="normal" textLength="32" lengthAdjust="spacingAndGlyphs">1.12640</text>
<text x="753.5" y="324" fill="#fff" font-size="11" font-weight="normal" textLength="32" lengthAdjust="spacingAndGlyphs">1.12230</text>
<text x="753.5" y="356" fill="#fff" font-size="11" font-weight="normal" textLength="32" lengthAdjust="spacingAndGlyphs">1.11820</text>
<text x="753.5" y="388" fill="#fff" font-size="11" font-weight="normal" textLength="32" lengthAdjust="spacingAndGlyphs">1.11410</text>
<text x="753.5" y="420" fill="#fff" font-size="11" font-weight="normal" textLength="32" lengthAdjust="spacingAndGlyphs">1.11000</text>
<text x="753" y="459" fill="#fff" font-size="11" font-weight="normal" textLength="38" lengthAdjust="spacingAndGlyphs">0.004241</text>
<text x="753" y="528" fill="#fff" font-size="11" font-weight="normal" textLength="38" lengthAdjust="spacingAndGlyphs">0.000000</text>
<text x="753" y="578" fill="#fff" font-size="11" font-weight="normal" textLength="42" lengthAdjust="spacingAndGlyphs">-0.003084</text>
<text x="3" y="593" fill="#fff" font-size="11" font-weight="normal" textLength="53" lengthAdjust="spacingAndGlyphs">15 Nov 2018</text>
<text x="67" y="593" fill="#fff" font-size="11" font-weight="normal" textLength="56" lengthAdjust="spacingAndGlyphs">19 Nov 20:00</text>
<text x="131" y="593" fill="#fff" font-size="11" font-weight="normal" textLength="56" lengthAdjust="spacingAndGlyphs">22 Nov 12:00</text>
<text x="195" y="593" fill="#fff" font-size="11" font-weight="normal" textLength="56" lengthAdjust="spacingAndGlyphs">27 Nov 04:00</text>
<text x="259" y="593" fill="#fff" font-size="11" font-weight="normal" textLength="57" lengthAdjust="spacingAndGlyphs">29 Nov 20:00</text>
<text x="323" y="593" fill="#fff" font-size="11" font-weight="normal" textLength="50" lengthAdjust="spacingAndGlyphs">4 Dec 12:00</text>
<text x="387" y="593" fill="#fff" font-size="11" font-weight="normal" textLength="49" lengthAdjust="spacingAndGlyphs">7 Dec 04:00</text>
<text x="451" y="593" fill="#fff" font-size="11" font-weight="normal" textLength="55" lengthAdjust="spacingAndGlyphs">11 Dec 20:00</text>
<text x="515" y="593" fill="#fff" font-size="11" font-weight="normal" textLength="55" lengthAdjust="spacingAndGlyphs">14 Dec 12:00</text>
<text x="579" y="593" fill="#fff" font-size="11" font-weight="normal" textLength="55" lengthAdjust="spacingAndGlyphs">19 Dec 04:00</text>
<text x="7" y="14" fill="#fff" font-size="11" font-weight="normal" textLength="55" lengthAdjust="spacingAndGlyphs">EURUSD,H4</text>
<rect x="750" y="112" width="39" height="11" fill="#FF0000"/>
<text x="753.5" y="122" fill="#000" font-size="11" font-weight="normal" textLength="32" lengthAdjust="spacingAndGlyphs">1.14822</text>
<rect x="750" y="144" width="39" height="11" fill="#FF0000"/>
<text x="753.5" y="154" fill="#000" font-size="11" font-weight="normal" textLength="32" lengthAdjust="spacingAndGlyphs">1.14410</text>
<rect x="750" y="161" width="39" height="11" fill="#778899"/>
<text x="753.5" y="171" fill="#000" font-size="11" font-weight="normal" textLength="32" lengthAdjust="spacingAndGlyphs">1.14186</text>
<rect x="750" y="278" width="39" height="11" fill="#00FFFF"/>
<text x="753.5" y="288" fill="#000" font-size="11" font-weight="normal" textLength="32" lengthAdjust="spacingAndGlyphs">1.12688</text>
<rect x="750" y="320" width="39" height="11" fill="#00FFFF"/>
<text x="753.5" y="330" fill="#000" font-size="11" font-weight="normal" textLength="32" lengthAdjust="spacingAndGlyphs">1.12154</text>
<text x="6" y="463" fill="#fff" font-size="11" font-weight="normal" textLength="148" lengthAdjust="spacingAndGlyphs">MACD(12,26,9) 0.001954 0.002337</text>
</g>
</svg></body></html>
